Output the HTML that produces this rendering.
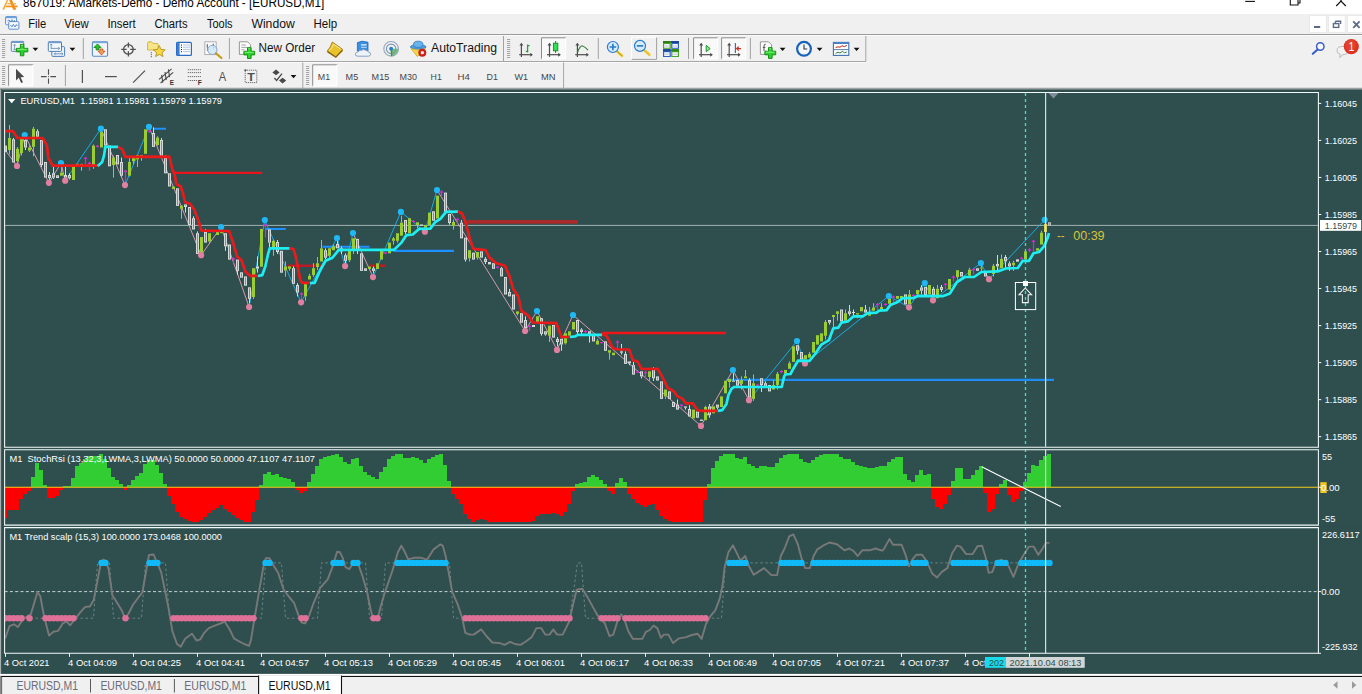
<!DOCTYPE html>
<html lang="en"><head><meta charset="utf-8"><title>867019: AMarkets-Demo - Demo Account - [EURUSD,M1]</title>
<style>
html,body{margin:0;padding:0;background:#f0f0f0;overflow:hidden}
svg{display:block;font-family:'Liberation Sans', 'DejaVu Sans', sans-serif}
</style></head><body>
<svg width="1362" height="694" viewBox="0 0 1362 694">
<rect x="0.00" y="0.00" width="1362.00" height="694.00" fill="#f0f0f0" /><rect x="0.00" y="0.00" width="1362.00" height="14.00" fill="#ffffff" /><rect x="0.00" y="89.60" width="1362.00" height="584.40" fill="#2f4f4f" /><rect x="0" y="87.6" width="1362" height="1.2" fill="#b9bcbc"/><rect x="0" y="88.6" width="1362" height="1.2" fill="#5f6f6f"/><rect x="0.00" y="89.50" width="1.30" height="584.50" fill="#a9aeae" /><rect x="1.30" y="89.50" width="0.90" height="584.50" fill="#3a5252" /><defs><clipPath id="cm"><rect x="5.1" y="93.0" width="1312.8000000000002" height="353.7"/></clipPath><clipPath id="c1"><rect x="5.1" y="450.2" width="1312.8000000000002" height="74.40000000000003"/></clipPath><clipPath id="c2"><rect x="5.1" y="528.1" width="1312.8000000000002" height="124.69999999999993"/></clipPath></defs><g clip-path="url(#cm)"><line x1="4.60" y1="225.40" x2="1318.40" y2="225.40" stroke="#9fb2b2" stroke-width="1" /><line x1="153.60" y1="128.80" x2="166.00" y2="128.80" stroke="#1e90ff" stroke-width="2" /><line x1="172.50" y1="172.90" x2="262.20" y2="172.90" stroke="#e8141c" stroke-width="2.4" /><line x1="265.30" y1="228.90" x2="285.80" y2="228.90" stroke="#1e90ff" stroke-width="2" /><line x1="286.60" y1="265.80" x2="321.70" y2="265.80" stroke="#b81c24" stroke-width="2.6" /><line x1="322.40" y1="246.80" x2="369.50" y2="246.80" stroke="#1e90ff" stroke-width="2" /><line x1="370.00" y1="265.80" x2="375.00" y2="265.80" stroke="#b81c24" stroke-width="2.6" /><line x1="380.00" y1="265.80" x2="386.00" y2="265.80" stroke="#b81c24" stroke-width="2.6" /><line x1="394.00" y1="250.90" x2="453.90" y2="250.90" stroke="#1e90ff" stroke-width="2.2" /><line x1="466.70" y1="221.90" x2="578.00" y2="221.90" stroke="#a82a2a" stroke-width="3.6" /><line x1="602.20" y1="333.00" x2="726.00" y2="333.00" stroke="#f01418" stroke-width="2.3" /><line x1="726.50" y1="379.90" x2="1054.00" y2="379.90" stroke="#1e8cf0" stroke-width="2.4" /><line x1="5.00" y1="150.00" x2="17.00" y2="166.00" stroke="#e9a3b7" stroke-width="0.9" /><line x1="17.00" y1="166.00" x2="24.70" y2="135.00" stroke="#e9a3b7" stroke-width="0.9" /><line x1="24.70" y1="135.00" x2="48.90" y2="182.80" stroke="#e9a3b7" stroke-width="0.9" /><line x1="48.90" y1="182.80" x2="61.00" y2="163.20" stroke="#e9a3b7" stroke-width="0.9" /><line x1="61.00" y1="163.20" x2="65.20" y2="180.70" stroke="#e9a3b7" stroke-width="0.9" /><line x1="65.20" y1="180.70" x2="100.90" y2="128.70" stroke="#19b4f0" stroke-width="0.9" /><line x1="100.90" y1="128.70" x2="125.00" y2="185.10" stroke="#e9a3b7" stroke-width="0.9" /><line x1="125.00" y1="185.10" x2="149.00" y2="126.80" stroke="#19b4f0" stroke-width="0.9" /><line x1="149.00" y1="126.80" x2="201.10" y2="255.20" stroke="#e9a3b7" stroke-width="0.9" /><line x1="201.10" y1="255.20" x2="221.10" y2="227.00" stroke="#e9a3b7" stroke-width="0.9" /><line x1="221.10" y1="227.00" x2="249.10" y2="307.00" stroke="#e9a3b7" stroke-width="0.9" /><line x1="249.10" y1="307.00" x2="264.80" y2="220.10" stroke="#19b4f0" stroke-width="0.9" /><line x1="264.80" y1="220.10" x2="301.00" y2="302.30" stroke="#19b4f0" stroke-width="0.9" /><line x1="301.00" y1="302.30" x2="337.00" y2="238.00" stroke="#19b4f0" stroke-width="0.9" /><line x1="337.00" y1="238.00" x2="345.10" y2="266.10" stroke="#19b4f0" stroke-width="0.9" /><line x1="345.10" y1="266.10" x2="353.00" y2="233.00" stroke="#19b4f0" stroke-width="0.9" /><line x1="353.00" y1="233.00" x2="373.00" y2="277.10" stroke="#e9a3b7" stroke-width="0.9" /><line x1="373.00" y1="277.10" x2="400.90" y2="211.90" stroke="#19b4f0" stroke-width="0.9" /><line x1="400.90" y1="211.90" x2="424.90" y2="231.70" stroke="#19b4f0" stroke-width="0.9" /><line x1="424.90" y1="231.70" x2="437.00" y2="190.00" stroke="#19b4f0" stroke-width="0.9" /><line x1="437.00" y1="190.00" x2="525.10" y2="331.00" stroke="#e9a3b7" stroke-width="0.9" /><line x1="525.10" y1="331.00" x2="537.00" y2="311.00" stroke="#e9a3b7" stroke-width="0.9" /><line x1="537.00" y1="311.00" x2="557.00" y2="349.90" stroke="#e9a3b7" stroke-width="0.9" /><line x1="557.00" y1="349.90" x2="573.00" y2="315.00" stroke="#e9a3b7" stroke-width="0.9" /><line x1="573.00" y1="315.00" x2="701.00" y2="425.90" stroke="#e9a3b7" stroke-width="0.9" /><line x1="701.00" y1="425.90" x2="732.90" y2="370.10" stroke="#e9a3b7" stroke-width="0.9" /><line x1="732.90" y1="370.10" x2="749.00" y2="400.20" stroke="#e9a3b7" stroke-width="0.9" /><line x1="749.00" y1="400.20" x2="797.00" y2="341.00" stroke="#19b4f0" stroke-width="0.9" /><line x1="797.00" y1="341.00" x2="805.00" y2="363.40" stroke="#19b4f0" stroke-width="0.9" /><line x1="805.00" y1="363.40" x2="888.80" y2="296.00" stroke="#19b4f0" stroke-width="0.9" /><line x1="888.80" y1="296.00" x2="909.00" y2="307.30" stroke="#19b4f0" stroke-width="0.9" /><line x1="909.00" y1="307.30" x2="924.80" y2="283.10" stroke="#19b4f0" stroke-width="0.9" /><line x1="924.80" y1="283.10" x2="933.00" y2="300.30" stroke="#19b4f0" stroke-width="0.9" /><line x1="933.00" y1="300.30" x2="980.90" y2="263.00" stroke="#19b4f0" stroke-width="0.9" /><line x1="980.90" y1="263.00" x2="989.00" y2="279.20" stroke="#19b4f0" stroke-width="0.9" /><line x1="989.00" y1="279.20" x2="1044.70" y2="219.80" stroke="#19b4f0" stroke-width="0.9" /><rect x="5.20" y="145.60" width="1.80" height="6.40" fill="#d6dada" /><line x1="9.50" y1="125.00" x2="9.50" y2="138.00" stroke="#9acd32" stroke-width="1" /><line x1="9.50" y1="150.00" x2="9.50" y2="154.50" stroke="#9acd32" stroke-width="1" /><rect x="8.00" y="138.00" width="3.00" height="12.00" fill="#9acd32" /><line x1="13.50" y1="138.00" x2="13.50" y2="139.30" stroke="#d6dada" stroke-width="1" /><rect x="12.00" y="139.30" width="3.00" height="23.20" fill="#d6dada" /><rect x="13.00" y="140.30" width="1.00" height="21.20" fill="#828e8e" /><line x1="17.50" y1="147.00" x2="17.50" y2="148.70" stroke="#9acd32" stroke-width="1" /><line x1="17.50" y1="161.30" x2="17.50" y2="163.00" stroke="#9acd32" stroke-width="1" /><rect x="16.00" y="148.70" width="3.00" height="12.60" fill="#9acd32" /><line x1="21.50" y1="153.00" x2="21.50" y2="155.60" stroke="#9acd32" stroke-width="1" /><rect x="20.00" y="138.70" width="3.00" height="14.30" fill="#9acd32" /><line x1="25.50" y1="139.30" x2="25.50" y2="140.00" stroke="#d6dada" stroke-width="1" /><line x1="25.50" y1="147.50" x2="25.50" y2="150.00" stroke="#d6dada" stroke-width="1" /><rect x="24.00" y="140.00" width="3.00" height="7.50" fill="#d6dada" /><rect x="25.00" y="141.00" width="1.00" height="5.50" fill="#828e8e" /><line x1="29.50" y1="145.60" x2="29.50" y2="147.50" stroke="#9acd32" stroke-width="1" /><line x1="29.50" y1="150.60" x2="29.50" y2="152.00" stroke="#9acd32" stroke-width="1" /><rect x="28.00" y="147.50" width="3.00" height="3.10" fill="#9acd32" /><line x1="33.50" y1="126.80" x2="33.50" y2="128.70" stroke="#9acd32" stroke-width="1" /><line x1="33.50" y1="146.90" x2="33.50" y2="156.30" stroke="#9acd32" stroke-width="1" /><rect x="32.00" y="128.70" width="3.00" height="18.20" fill="#9acd32" /><line x1="37.50" y1="129.30" x2="37.50" y2="131.20" stroke="#d6dada" stroke-width="1" /><rect x="36.00" y="131.20" width="3.00" height="5.60" fill="#d6dada" /><rect x="37.00" y="132.20" width="1.00" height="3.60" fill="#828e8e" /><line x1="41.50" y1="165.00" x2="41.50" y2="167.00" stroke="#d6dada" stroke-width="1" /><rect x="40.00" y="140.00" width="3.00" height="25.00" fill="#d6dada" /><rect x="41.00" y="141.00" width="1.00" height="23.00" fill="#828e8e" /><rect x="44.00" y="162.00" width="3.00" height="15.60" fill="#d6dada" /><rect x="45.00" y="163.00" width="1.00" height="13.60" fill="#828e8e" /><line x1="49.50" y1="172.00" x2="49.50" y2="175.00" stroke="#d6dada" stroke-width="1" /><line x1="49.50" y1="178.20" x2="49.50" y2="180.00" stroke="#d6dada" stroke-width="1" /><rect x="48.00" y="175.00" width="3.00" height="3.20" fill="#d6dada" /><rect x="49.00" y="176.00" width="1.00" height="1.20" fill="#828e8e" /><line x1="53.50" y1="167.00" x2="53.50" y2="173.20" stroke="#d6dada" stroke-width="1" /><line x1="53.50" y1="177.60" x2="53.50" y2="179.00" stroke="#d6dada" stroke-width="1" /><rect x="52.00" y="173.20" width="3.00" height="4.40" fill="#d6dada" /><rect x="53.00" y="174.20" width="1.00" height="2.40" fill="#828e8e" /><rect x="56.00" y="175.30" width="3.00" height="2.70" fill="#d6dada" /><rect x="57.00" y="176.30" width="1.00" height="0.70" fill="#828e8e" /><line x1="61.50" y1="167.00" x2="61.50" y2="172.60" stroke="#9acd32" stroke-width="1" /><rect x="60.00" y="172.60" width="3.00" height="3.10" fill="#9acd32" /><line x1="65.50" y1="167.00" x2="65.50" y2="175.00" stroke="#d6dada" stroke-width="1" /><rect x="64.00" y="175.00" width="3.00" height="2.60" fill="#d6dada" /><rect x="65.00" y="176.00" width="1.00" height="0.60" fill="#828e8e" /><line x1="69.50" y1="173.20" x2="69.50" y2="175.00" stroke="#d6dada" stroke-width="1" /><line x1="69.50" y1="178.20" x2="69.50" y2="179.50" stroke="#d6dada" stroke-width="1" /><rect x="68.00" y="175.00" width="3.00" height="3.20" fill="#d6dada" /><rect x="69.00" y="176.00" width="1.00" height="1.20" fill="#828e8e" /><rect x="72.00" y="167.00" width="3.00" height="13.00" fill="#9acd32" /><rect x="76.00" y="163.90" width="3.00" height="1.00" fill="#e0b040" /><rect x="80.00" y="163.90" width="3.00" height="1.00" fill="#e0b040" /><line x1="81.50" y1="164.40" x2="81.50" y2="170.70" stroke="#d8c040" stroke-width="1" /><line x1="85.50" y1="157.00" x2="85.50" y2="164.40" stroke="#d62ad6" stroke-width="1.2" /><path d="M83.9 159.2 L85.5 157.0 L87.1 159.2" stroke="#d62ad6" stroke-width="1" fill="none"/><line x1="89.50" y1="162.00" x2="89.50" y2="170.70" stroke="#d62ad6" stroke-width="1.2" /><path d="M87.9 164.2 L89.5 162.0 L91.1 164.2" stroke="#d62ad6" stroke-width="1" fill="none"/><line x1="93.50" y1="144.40" x2="93.50" y2="145.60" stroke="#9acd32" stroke-width="1" /><line x1="93.50" y1="165.00" x2="93.50" y2="168.80" stroke="#9acd32" stroke-width="1" /><rect x="92.00" y="145.60" width="3.00" height="19.40" fill="#9acd32" /><line x1="97.50" y1="145.00" x2="97.50" y2="147.50" stroke="#d62ad6" stroke-width="1.2" /><rect x="96.00" y="145.65" width="3.00" height="1.20" fill="#d62ad6" /><line x1="101.50" y1="126.80" x2="101.50" y2="131.80" stroke="#9acd32" stroke-width="1" /><rect x="100.00" y="131.80" width="3.00" height="15.70" fill="#9acd32" /><line x1="105.50" y1="145.60" x2="105.50" y2="147.00" stroke="#d6dada" stroke-width="1" /><rect x="104.00" y="129.30" width="3.00" height="16.30" fill="#d6dada" /><rect x="105.00" y="130.30" width="1.00" height="14.30" fill="#828e8e" /><rect x="108.00" y="145.60" width="3.00" height="20.70" fill="#d6dada" /><rect x="109.00" y="146.60" width="1.00" height="18.70" fill="#828e8e" /><line x1="113.50" y1="155.60" x2="113.50" y2="157.50" stroke="#9acd32" stroke-width="1" /><line x1="113.50" y1="165.00" x2="113.50" y2="177.60" stroke="#9acd32" stroke-width="1" /><rect x="112.00" y="157.50" width="3.00" height="7.50" fill="#9acd32" /><rect x="116.00" y="155.00" width="3.00" height="9.40" fill="#d6dada" /><rect x="117.00" y="156.00" width="1.00" height="7.40" fill="#828e8e" /><line x1="121.50" y1="157.50" x2="121.50" y2="162.00" stroke="#d6dada" stroke-width="1" /><line x1="121.50" y1="175.70" x2="121.50" y2="176.50" stroke="#d6dada" stroke-width="1" /><rect x="120.00" y="162.00" width="3.00" height="13.70" fill="#d6dada" /><rect x="121.00" y="163.00" width="1.00" height="11.70" fill="#828e8e" /><line x1="125.50" y1="170.00" x2="125.50" y2="182.00" stroke="#d62ad6" stroke-width="1.2" /><path d="M123.9 172.2 L125.5 170.0 L127.1 172.2" stroke="#d62ad6" stroke-width="1" fill="none"/><line x1="129.50" y1="158.00" x2="129.50" y2="162.00" stroke="#9acd32" stroke-width="1" /><line x1="129.50" y1="175.70" x2="129.50" y2="176.50" stroke="#9acd32" stroke-width="1" /><rect x="128.00" y="162.00" width="3.00" height="13.70" fill="#9acd32" /><line x1="133.50" y1="161.30" x2="133.50" y2="164.40" stroke="#9acd32" stroke-width="1" /><rect x="132.00" y="158.00" width="3.00" height="3.30" fill="#9acd32" /><line x1="137.50" y1="159.40" x2="137.50" y2="167.00" stroke="#9acd32" stroke-width="1" /><rect x="136.00" y="155.00" width="3.00" height="4.40" fill="#9acd32" /><rect x="140.00" y="155.10" width="3.00" height="1.00" fill="#e0b040" /><line x1="141.50" y1="155.60" x2="141.50" y2="160.70" stroke="#d8c040" stroke-width="1" /><rect x="144.00" y="129.30" width="3.00" height="24.50" fill="#9acd32" /><line x1="149.50" y1="129.50" x2="149.50" y2="133.00" stroke="#d62ad6" stroke-width="1.2" /><rect x="148.00" y="130.65" width="3.00" height="1.20" fill="#d62ad6" /><line x1="153.50" y1="127.40" x2="153.50" y2="133.00" stroke="#d6dada" stroke-width="1" /><rect x="152.00" y="133.00" width="3.00" height="13.90" fill="#d6dada" /><rect x="153.00" y="134.00" width="1.00" height="11.90" fill="#828e8e" /><line x1="157.50" y1="136.20" x2="157.50" y2="137.50" stroke="#9acd32" stroke-width="1" /><line x1="157.50" y1="145.00" x2="157.50" y2="145.60" stroke="#9acd32" stroke-width="1" /><rect x="156.00" y="137.50" width="3.00" height="7.50" fill="#9acd32" /><line x1="161.50" y1="138.00" x2="161.50" y2="140.00" stroke="#d6dada" stroke-width="1" /><rect x="160.00" y="140.00" width="3.00" height="16.50" fill="#d6dada" /><rect x="161.00" y="141.00" width="1.00" height="14.50" fill="#828e8e" /><line x1="165.50" y1="155.00" x2="165.50" y2="157.50" stroke="#d6dada" stroke-width="1" /><rect x="164.00" y="157.50" width="3.00" height="15.80" fill="#d6dada" /><rect x="165.00" y="158.50" width="1.00" height="13.80" fill="#828e8e" /><rect x="168.00" y="173.30" width="3.00" height="13.20" fill="#d6dada" /><rect x="169.00" y="174.30" width="1.00" height="11.20" fill="#828e8e" /><rect x="172.00" y="186.50" width="3.00" height="2.50" fill="#9acd32" /><rect x="176.00" y="188.30" width="3.00" height="17.60" fill="#d6dada" /><rect x="177.00" y="189.30" width="1.00" height="15.60" fill="#828e8e" /><line x1="181.50" y1="205.00" x2="181.50" y2="205.70" stroke="#9acd32" stroke-width="1" /><line x1="181.50" y1="208.80" x2="181.50" y2="218.80" stroke="#9acd32" stroke-width="1" /><rect x="180.00" y="205.70" width="3.00" height="3.10" fill="#9acd32" /><line x1="185.50" y1="207.00" x2="185.50" y2="212.60" stroke="#d6dada" stroke-width="1" /><rect x="184.00" y="204.40" width="3.00" height="2.60" fill="#d6dada" /><rect x="185.00" y="205.40" width="1.00" height="0.60" fill="#828e8e" /><rect x="188.00" y="207.00" width="3.00" height="18.00" fill="#d6dada" /><rect x="189.00" y="208.00" width="1.00" height="16.00" fill="#828e8e" /><line x1="193.50" y1="216.30" x2="193.50" y2="218.20" stroke="#d6dada" stroke-width="1" /><rect x="192.00" y="218.20" width="3.00" height="11.30" fill="#d6dada" /><rect x="193.00" y="219.20" width="1.00" height="9.30" fill="#828e8e" /><line x1="197.50" y1="231.40" x2="197.50" y2="233.20" stroke="#d6dada" stroke-width="1" /><rect x="196.00" y="233.20" width="3.00" height="20.80" fill="#d6dada" /><rect x="197.00" y="234.20" width="1.00" height="18.80" fill="#828e8e" /><rect x="200.00" y="237.00" width="3.00" height="17.00" fill="#9acd32" /><line x1="205.50" y1="228.90" x2="205.50" y2="232.00" stroke="#d6dada" stroke-width="1" /><rect x="204.00" y="232.00" width="3.00" height="10.60" fill="#d6dada" /><rect x="205.00" y="233.00" width="1.00" height="8.60" fill="#828e8e" /><line x1="209.50" y1="241.40" x2="209.50" y2="243.30" stroke="#9acd32" stroke-width="1" /><rect x="208.00" y="233.20" width="3.00" height="8.20" fill="#9acd32" /><line x1="213.50" y1="230.50" x2="213.50" y2="232.50" stroke="#d62ad6" stroke-width="1.2" /><rect x="212.00" y="230.90" width="3.00" height="1.20" fill="#d62ad6" /><rect x="216.00" y="232.00" width="3.00" height="3.00" fill="#9acd32" /><rect x="220.00" y="231.40" width="3.00" height="1.80" fill="#9acd32" /><line x1="225.50" y1="246.40" x2="225.50" y2="250.80" stroke="#d6dada" stroke-width="1" /><rect x="224.00" y="233.20" width="3.00" height="13.20" fill="#d6dada" /><rect x="225.00" y="234.20" width="1.00" height="11.20" fill="#828e8e" /><rect x="228.00" y="244.50" width="3.00" height="15.10" fill="#d6dada" /><rect x="229.00" y="245.50" width="1.00" height="13.10" fill="#828e8e" /><line x1="233.50" y1="257.70" x2="233.50" y2="262.70" stroke="#d62ad6" stroke-width="1.2" /><path d="M231.9 259.9 L233.5 257.7 L235.1 259.9" stroke="#d62ad6" stroke-width="1" fill="none"/><line x1="237.50" y1="270.90" x2="237.50" y2="275.00" stroke="#d6dada" stroke-width="1" /><rect x="236.00" y="259.60" width="3.00" height="11.30" fill="#d6dada" /><rect x="237.00" y="260.60" width="1.00" height="9.30" fill="#828e8e" /><rect x="240.00" y="272.30" width="3.00" height="5.40" fill="#d6dada" /><rect x="241.00" y="273.30" width="1.00" height="3.40" fill="#828e8e" /><rect x="244.00" y="276.40" width="3.00" height="9.30" fill="#d6dada" /><rect x="245.00" y="277.40" width="1.00" height="7.30" fill="#828e8e" /><line x1="249.50" y1="298.90" x2="249.50" y2="303.30" stroke="#d6dada" stroke-width="1" /><rect x="248.00" y="287.30" width="3.00" height="11.60" fill="#d6dada" /><rect x="249.00" y="288.30" width="1.00" height="9.60" fill="#828e8e" /><line x1="253.50" y1="297.00" x2="253.50" y2="299.00" stroke="#9acd32" stroke-width="1" /><rect x="252.00" y="268.20" width="3.00" height="28.80" fill="#9acd32" /><line x1="257.50" y1="256.40" x2="257.50" y2="266.40" stroke="#d6dada" stroke-width="1" /><line x1="257.50" y1="268.60" x2="257.50" y2="272.60" stroke="#d6dada" stroke-width="1" /><rect x="256.00" y="266.40" width="3.00" height="2.20" fill="#d6dada" /><rect x="260.00" y="228.90" width="3.00" height="37.80" fill="#9acd32" /><line x1="265.50" y1="223.80" x2="265.50" y2="237.60" stroke="#d62ad6" stroke-width="1.2" /><path d="M263.9 226.0 L265.5 223.8 L267.1 226.0" stroke="#d62ad6" stroke-width="1" fill="none"/><line x1="269.50" y1="242.60" x2="269.50" y2="247.70" stroke="#d6dada" stroke-width="1" /><rect x="268.00" y="229.50" width="3.00" height="13.10" fill="#d6dada" /><rect x="269.00" y="230.50" width="1.00" height="11.10" fill="#828e8e" /><line x1="273.50" y1="239.50" x2="273.50" y2="240.80" stroke="#9acd32" stroke-width="1" /><line x1="273.50" y1="248.90" x2="273.50" y2="255.80" stroke="#9acd32" stroke-width="1" /><rect x="272.00" y="240.80" width="3.00" height="8.10" fill="#9acd32" /><line x1="277.50" y1="240.00" x2="277.50" y2="242.00" stroke="#d6dada" stroke-width="1" /><line x1="277.50" y1="252.00" x2="277.50" y2="254.00" stroke="#d6dada" stroke-width="1" /><rect x="276.00" y="242.00" width="3.00" height="10.00" fill="#d6dada" /><rect x="277.00" y="243.00" width="1.00" height="8.00" fill="#828e8e" /><rect x="280.00" y="250.80" width="3.00" height="21.90" fill="#d6dada" /><rect x="281.00" y="251.80" width="1.00" height="19.90" fill="#828e8e" /><line x1="285.50" y1="261.40" x2="285.50" y2="266.40" stroke="#9acd32" stroke-width="1" /><line x1="285.50" y1="270.50" x2="285.50" y2="276.80" stroke="#9acd32" stroke-width="1" /><rect x="284.00" y="266.40" width="3.00" height="4.10" fill="#9acd32" /><line x1="289.50" y1="268.80" x2="289.50" y2="270.70" stroke="#9acd32" stroke-width="1" /><rect x="288.00" y="266.40" width="3.00" height="2.40" fill="#9acd32" /><line x1="293.50" y1="266.30" x2="293.50" y2="268.20" stroke="#d6dada" stroke-width="1" /><rect x="292.00" y="268.20" width="3.00" height="15.60" fill="#d6dada" /><rect x="293.00" y="269.20" width="1.00" height="13.60" fill="#828e8e" /><line x1="297.50" y1="283.20" x2="297.50" y2="285.00" stroke="#d6dada" stroke-width="1" /><line x1="297.50" y1="292.60" x2="297.50" y2="296.40" stroke="#d6dada" stroke-width="1" /><rect x="296.00" y="285.00" width="3.00" height="7.60" fill="#d6dada" /><rect x="297.00" y="286.00" width="1.00" height="5.60" fill="#828e8e" /><line x1="301.50" y1="292.60" x2="301.50" y2="299.50" stroke="#d62ad6" stroke-width="1.2" /><path d="M299.9 294.8 L301.5 292.6 L303.1 294.8" stroke="#d62ad6" stroke-width="1" fill="none"/><line x1="305.50" y1="296.40" x2="305.50" y2="300.80" stroke="#9acd32" stroke-width="1" /><rect x="304.00" y="283.80" width="3.00" height="12.60" fill="#9acd32" /><line x1="309.50" y1="273.80" x2="309.50" y2="275.80" stroke="#9acd32" stroke-width="1" /><rect x="308.00" y="275.80" width="3.00" height="3.70" fill="#9acd32" /><line x1="313.50" y1="263.20" x2="313.50" y2="268.20" stroke="#9acd32" stroke-width="1" /><line x1="313.50" y1="275.10" x2="313.50" y2="276.90" stroke="#9acd32" stroke-width="1" /><rect x="312.00" y="268.20" width="3.00" height="6.90" fill="#9acd32" /><line x1="317.50" y1="257.00" x2="317.50" y2="263.20" stroke="#9acd32" stroke-width="1" /><line x1="317.50" y1="267.00" x2="317.50" y2="270.00" stroke="#9acd32" stroke-width="1" /><rect x="316.00" y="263.20" width="3.00" height="3.80" fill="#9acd32" /><line x1="321.50" y1="240.00" x2="321.50" y2="248.30" stroke="#9acd32" stroke-width="1" /><rect x="320.00" y="248.30" width="3.00" height="13.20" fill="#9acd32" /><line x1="325.50" y1="248.30" x2="325.50" y2="250.20" stroke="#d6dada" stroke-width="1" /><line x1="325.50" y1="257.70" x2="325.50" y2="259.00" stroke="#d6dada" stroke-width="1" /><rect x="324.00" y="250.20" width="3.00" height="7.50" fill="#d6dada" /><rect x="325.00" y="251.20" width="1.00" height="5.50" fill="#828e8e" /><line x1="329.50" y1="255.80" x2="329.50" y2="257.70" stroke="#9acd32" stroke-width="1" /><rect x="328.00" y="248.30" width="3.00" height="7.50" fill="#9acd32" /><line x1="333.50" y1="244.50" x2="333.50" y2="246.40" stroke="#9acd32" stroke-width="1" /><rect x="332.00" y="246.40" width="3.00" height="3.80" fill="#9acd32" /><line x1="337.50" y1="240.80" x2="337.50" y2="243.90" stroke="#d6dada" stroke-width="1" /><rect x="336.00" y="243.90" width="3.00" height="4.40" fill="#d6dada" /><rect x="337.00" y="244.90" width="1.00" height="2.40" fill="#828e8e" /><line x1="341.50" y1="246.40" x2="341.50" y2="248.30" stroke="#d6dada" stroke-width="1" /><line x1="341.50" y1="251.40" x2="341.50" y2="254.00" stroke="#d6dada" stroke-width="1" /><rect x="340.00" y="248.30" width="3.00" height="3.10" fill="#d6dada" /><rect x="341.00" y="249.30" width="1.00" height="1.10" fill="#828e8e" /><line x1="345.50" y1="253.30" x2="345.50" y2="255.20" stroke="#d6dada" stroke-width="1" /><line x1="345.50" y1="260.80" x2="345.50" y2="263.30" stroke="#d6dada" stroke-width="1" /><rect x="344.00" y="255.20" width="3.00" height="5.60" fill="#d6dada" /><rect x="345.00" y="256.20" width="1.00" height="3.60" fill="#828e8e" /><line x1="349.50" y1="260.20" x2="349.50" y2="262.00" stroke="#9acd32" stroke-width="1" /><rect x="348.00" y="250.80" width="3.00" height="9.40" fill="#9acd32" /><line x1="353.50" y1="250.20" x2="353.50" y2="254.00" stroke="#9acd32" stroke-width="1" /><rect x="352.00" y="238.30" width="3.00" height="11.90" fill="#9acd32" /><line x1="357.50" y1="250.80" x2="357.50" y2="254.00" stroke="#d6dada" stroke-width="1" /><rect x="356.00" y="238.90" width="3.00" height="11.90" fill="#d6dada" /><rect x="357.00" y="239.90" width="1.00" height="9.90" fill="#828e8e" /><rect x="360.00" y="253.30" width="3.00" height="17.60" fill="#d6dada" /><rect x="361.00" y="254.30" width="1.00" height="15.60" fill="#828e8e" /><rect x="364.00" y="268.30" width="3.00" height="2.60" fill="#d6dada" /><rect x="365.00" y="269.30" width="1.00" height="0.60" fill="#828e8e" /><line x1="369.50" y1="269.00" x2="369.50" y2="270.20" stroke="#9acd32" stroke-width="1" /><rect x="368.00" y="266.50" width="3.00" height="2.50" fill="#9acd32" /><line x1="373.50" y1="266.50" x2="373.50" y2="268.30" stroke="#d6dada" stroke-width="1" /><line x1="373.50" y1="270.90" x2="373.50" y2="273.40" stroke="#d6dada" stroke-width="1" /><rect x="372.00" y="268.30" width="3.00" height="2.60" fill="#d6dada" /><rect x="373.00" y="269.30" width="1.00" height="0.60" fill="#828e8e" /><rect x="376.00" y="263.30" width="3.00" height="5.70" fill="#9acd32" /><rect x="380.00" y="250.80" width="3.00" height="8.80" fill="#9acd32" /><line x1="385.50" y1="252.00" x2="385.50" y2="254.00" stroke="#d62ad6" stroke-width="1.2" /><rect x="384.00" y="252.40" width="3.00" height="1.20" fill="#d62ad6" /><rect x="388.00" y="242.60" width="3.00" height="10.70" fill="#9acd32" /><line x1="393.50" y1="237.00" x2="393.50" y2="238.30" stroke="#9acd32" stroke-width="1" /><line x1="393.50" y1="240.80" x2="393.50" y2="244.50" stroke="#9acd32" stroke-width="1" /><rect x="392.00" y="238.30" width="3.00" height="2.50" fill="#9acd32" /><line x1="397.50" y1="240.80" x2="397.50" y2="242.60" stroke="#9acd32" stroke-width="1" /><rect x="396.00" y="233.20" width="3.00" height="7.60" fill="#9acd32" /><line x1="401.50" y1="215.70" x2="401.50" y2="222.60" stroke="#9acd32" stroke-width="1" /><rect x="400.00" y="222.60" width="3.00" height="13.10" fill="#9acd32" /><line x1="405.50" y1="232.00" x2="405.50" y2="233.90" stroke="#d6dada" stroke-width="1" /><rect x="404.00" y="220.00" width="3.00" height="12.00" fill="#d6dada" /><rect x="405.00" y="221.00" width="1.00" height="10.00" fill="#828e8e" /><rect x="408.00" y="218.20" width="3.00" height="15.00" fill="#9acd32" /><line x1="413.50" y1="220.00" x2="413.50" y2="223.00" stroke="#d62ad6" stroke-width="1.2" /><rect x="412.00" y="220.90" width="3.00" height="1.20" fill="#d62ad6" /><line x1="417.50" y1="225.00" x2="417.50" y2="228.20" stroke="#9acd32" stroke-width="1" /><rect x="416.00" y="222.30" width="3.00" height="2.70" fill="#9acd32" /><rect x="420.00" y="224.50" width="3.00" height="1.20" fill="#d6dada" /><rect x="424.00" y="225.00" width="3.00" height="2.80" fill="#9acd32" /><rect x="428.00" y="212.60" width="3.00" height="12.40" fill="#9acd32" /><rect x="432.00" y="211.30" width="3.00" height="9.40" fill="#d6dada" /><rect x="433.00" y="212.30" width="1.00" height="7.40" fill="#828e8e" /><rect x="436.00" y="195.70" width="3.00" height="22.80" fill="#9acd32" /><line x1="441.50" y1="190.70" x2="441.50" y2="197.00" stroke="#d62ad6" stroke-width="1.2" /><path d="M439.9 192.9 L441.5 190.7 L443.1 192.9" stroke="#d62ad6" stroke-width="1" fill="none"/><rect x="444.00" y="192.60" width="3.00" height="19.10" fill="#d6dada" /><rect x="445.00" y="193.60" width="1.00" height="17.10" fill="#828e8e" /><line x1="449.50" y1="223.00" x2="449.50" y2="224.70" stroke="#d6dada" stroke-width="1" /><rect x="448.00" y="214.00" width="3.00" height="9.00" fill="#d6dada" /><rect x="449.00" y="215.00" width="1.00" height="7.00" fill="#828e8e" /><line x1="453.50" y1="219.50" x2="453.50" y2="222.00" stroke="#9acd32" stroke-width="1" /><line x1="453.50" y1="225.80" x2="453.50" y2="229.60" stroke="#9acd32" stroke-width="1" /><rect x="452.00" y="222.00" width="3.00" height="3.80" fill="#9acd32" /><line x1="457.50" y1="218.20" x2="457.50" y2="223.80" stroke="#d62ad6" stroke-width="1.2" /><path d="M455.9 220.4 L457.5 218.2 L459.1 220.4" stroke="#d62ad6" stroke-width="1" fill="none"/><line x1="461.50" y1="220.00" x2="461.50" y2="222.60" stroke="#d6dada" stroke-width="1" /><rect x="460.00" y="222.60" width="3.00" height="15.70" fill="#d6dada" /><rect x="461.00" y="223.60" width="1.00" height="13.70" fill="#828e8e" /><line x1="465.50" y1="259.60" x2="465.50" y2="261.50" stroke="#d6dada" stroke-width="1" /><rect x="464.00" y="237.70" width="3.00" height="21.90" fill="#d6dada" /><rect x="465.00" y="238.70" width="1.00" height="19.90" fill="#828e8e" /><line x1="469.50" y1="258.30" x2="469.50" y2="261.50" stroke="#9acd32" stroke-width="1" /><rect x="468.00" y="250.20" width="3.00" height="8.10" fill="#9acd32" /><rect x="472.00" y="252.70" width="3.00" height="6.90" fill="#d6dada" /><rect x="473.00" y="253.70" width="1.00" height="4.90" fill="#828e8e" /><line x1="477.50" y1="257.70" x2="477.50" y2="259.60" stroke="#9acd32" stroke-width="1" /><rect x="476.00" y="252.00" width="3.00" height="5.70" fill="#9acd32" /><rect x="480.00" y="251.40" width="3.00" height="6.20" fill="#d6dada" /><rect x="481.00" y="252.40" width="1.00" height="4.20" fill="#828e8e" /><line x1="485.50" y1="257.00" x2="485.50" y2="258.80" stroke="#d6dada" stroke-width="1" /><line x1="485.50" y1="262.00" x2="485.50" y2="264.00" stroke="#d6dada" stroke-width="1" /><rect x="484.00" y="258.80" width="3.00" height="3.20" fill="#d6dada" /><rect x="485.00" y="259.80" width="1.00" height="1.20" fill="#828e8e" /><rect x="488.00" y="262.00" width="3.00" height="2.40" fill="#d6dada" /><rect x="492.00" y="263.20" width="3.00" height="5.60" fill="#d6dada" /><rect x="493.00" y="264.20" width="1.00" height="3.60" fill="#828e8e" /><line x1="497.50" y1="266.30" x2="497.50" y2="268.20" stroke="#d62ad6" stroke-width="1.2" /><rect x="496.00" y="266.65" width="3.00" height="1.20" fill="#d62ad6" /><line x1="501.50" y1="267.00" x2="501.50" y2="268.20" stroke="#d6dada" stroke-width="1" /><rect x="500.00" y="268.20" width="3.00" height="8.20" fill="#d6dada" /><rect x="501.00" y="269.20" width="1.00" height="6.20" fill="#828e8e" /><rect x="504.00" y="277.00" width="3.00" height="17.50" fill="#d6dada" /><rect x="505.00" y="278.00" width="1.00" height="15.50" fill="#828e8e" /><line x1="509.50" y1="288.90" x2="509.50" y2="292.00" stroke="#d6dada" stroke-width="1" /><rect x="508.00" y="292.00" width="3.00" height="4.40" fill="#d6dada" /><rect x="509.00" y="293.00" width="1.00" height="2.40" fill="#828e8e" /><rect x="512.00" y="294.50" width="3.00" height="15.00" fill="#d6dada" /><rect x="513.00" y="295.50" width="1.00" height="13.00" fill="#828e8e" /><line x1="517.50" y1="313.90" x2="517.50" y2="315.50" stroke="#9acd32" stroke-width="1" /><rect x="516.00" y="311.40" width="3.00" height="2.50" fill="#9acd32" /><rect x="520.00" y="313.20" width="3.00" height="9.50" fill="#d6dada" /><rect x="521.00" y="314.20" width="1.00" height="7.50" fill="#828e8e" /><line x1="525.50" y1="316.30" x2="525.50" y2="320.00" stroke="#d6dada" stroke-width="1" /><rect x="524.00" y="320.00" width="3.00" height="8.20" fill="#d6dada" /><rect x="525.00" y="321.00" width="1.00" height="6.20" fill="#828e8e" /><line x1="529.50" y1="325.00" x2="529.50" y2="331.00" stroke="#d62ad6" stroke-width="1.2" /><path d="M527.9 327.2 L529.5 325.0 L531.1 327.2" stroke="#d62ad6" stroke-width="1" fill="none"/><rect x="532.00" y="325.00" width="3.00" height="2.00" fill="#d6dada" /><rect x="536.00" y="316.30" width="3.00" height="6.30" fill="#9acd32" /><line x1="541.50" y1="333.90" x2="541.50" y2="335.70" stroke="#d6dada" stroke-width="1" /><rect x="540.00" y="318.20" width="3.00" height="15.70" fill="#d6dada" /><rect x="541.00" y="319.20" width="1.00" height="13.70" fill="#828e8e" /><line x1="545.50" y1="334.50" x2="545.50" y2="335.70" stroke="#d6dada" stroke-width="1" /><rect x="544.00" y="331.30" width="3.00" height="3.20" fill="#d6dada" /><rect x="545.00" y="332.30" width="1.00" height="1.20" fill="#828e8e" /><line x1="549.50" y1="335.70" x2="549.50" y2="342.00" stroke="#9acd32" stroke-width="1" /><rect x="548.00" y="325.70" width="3.00" height="10.00" fill="#9acd32" /><rect x="552.00" y="325.00" width="3.00" height="12.60" fill="#d6dada" /><rect x="553.00" y="326.00" width="1.00" height="10.60" fill="#828e8e" /><line x1="557.50" y1="337.00" x2="557.50" y2="338.90" stroke="#d6dada" stroke-width="1" /><line x1="557.50" y1="342.00" x2="557.50" y2="346.40" stroke="#d6dada" stroke-width="1" /><rect x="556.00" y="338.90" width="3.00" height="3.10" fill="#d6dada" /><rect x="557.00" y="339.90" width="1.00" height="1.10" fill="#828e8e" /><line x1="561.50" y1="344.50" x2="561.50" y2="350.80" stroke="#d6dada" stroke-width="1" /><rect x="560.00" y="338.90" width="3.00" height="5.60" fill="#d6dada" /><rect x="561.00" y="339.90" width="1.00" height="3.60" fill="#828e8e" /><line x1="565.50" y1="343.30" x2="565.50" y2="344.50" stroke="#9acd32" stroke-width="1" /><rect x="564.00" y="333.20" width="3.00" height="10.10" fill="#9acd32" /><rect x="568.00" y="331.30" width="3.00" height="4.40" fill="#9acd32" /><rect x="572.00" y="322.00" width="3.00" height="7.50" fill="#9acd32" /><line x1="577.50" y1="332.00" x2="577.50" y2="334.50" stroke="#d6dada" stroke-width="1" /><rect x="576.00" y="320.00" width="3.00" height="12.00" fill="#d6dada" /><rect x="577.00" y="321.00" width="1.00" height="10.00" fill="#828e8e" /><line x1="581.50" y1="328.20" x2="581.50" y2="329.50" stroke="#d6dada" stroke-width="1" /><line x1="581.50" y1="332.00" x2="581.50" y2="333.90" stroke="#d6dada" stroke-width="1" /><rect x="580.00" y="329.50" width="3.00" height="2.50" fill="#d6dada" /><rect x="581.00" y="330.50" width="1.00" height="0.50" fill="#828e8e" /><line x1="585.50" y1="330.00" x2="585.50" y2="333.00" stroke="#d62ad6" stroke-width="1.2" /><rect x="584.00" y="330.90" width="3.00" height="1.20" fill="#d62ad6" /><line x1="589.50" y1="333.90" x2="589.50" y2="342.60" stroke="#d6dada" stroke-width="1" /><rect x="588.00" y="331.30" width="3.00" height="2.60" fill="#d6dada" /><rect x="589.00" y="332.30" width="1.00" height="0.60" fill="#828e8e" /><rect x="592.00" y="333.90" width="3.00" height="7.50" fill="#d6dada" /><rect x="593.00" y="334.90" width="1.00" height="5.50" fill="#828e8e" /><line x1="597.50" y1="338.90" x2="597.50" y2="340.70" stroke="#9acd32" stroke-width="1" /><rect x="596.00" y="340.70" width="3.00" height="3.80" fill="#9acd32" /><line x1="601.50" y1="342.00" x2="601.50" y2="343.20" stroke="#d62ad6" stroke-width="1.2" /><rect x="600.00" y="342.00" width="3.00" height="1.20" fill="#d62ad6" /><rect x="604.00" y="341.40" width="3.00" height="9.40" fill="#d6dada" /><rect x="605.00" y="342.40" width="1.00" height="7.40" fill="#828e8e" /><line x1="609.50" y1="352.70" x2="609.50" y2="359.60" stroke="#9acd32" stroke-width="1" /><rect x="608.00" y="350.20" width="3.00" height="2.50" fill="#9acd32" /><rect x="612.00" y="352.70" width="3.00" height="2.50" fill="#9acd32" /><line x1="617.50" y1="340.70" x2="617.50" y2="350.20" stroke="#d62ad6" stroke-width="1.2" /><path d="M615.9 342.9 L617.5 340.7 L619.1 342.9" stroke="#d62ad6" stroke-width="1" fill="none"/><line x1="621.50" y1="343.90" x2="621.50" y2="351.40" stroke="#d6dada" stroke-width="1" /><line x1="621.50" y1="352.70" x2="621.50" y2="354.50" stroke="#d6dada" stroke-width="1" /><rect x="620.00" y="351.40" width="3.00" height="1.30" fill="#d6dada" /><line x1="625.50" y1="351.40" x2="625.50" y2="353.90" stroke="#d6dada" stroke-width="1" /><rect x="624.00" y="353.90" width="3.00" height="10.00" fill="#d6dada" /><rect x="625.00" y="354.90" width="1.00" height="8.00" fill="#828e8e" /><line x1="629.50" y1="363.30" x2="629.50" y2="365.20" stroke="#d6dada" stroke-width="1" /><rect x="628.00" y="361.40" width="3.00" height="1.90" fill="#d6dada" /><line x1="633.50" y1="362.00" x2="633.50" y2="365.20" stroke="#d6dada" stroke-width="1" /><rect x="632.00" y="365.20" width="3.00" height="9.40" fill="#d6dada" /><rect x="633.00" y="366.20" width="1.00" height="7.40" fill="#828e8e" /><line x1="637.50" y1="371.50" x2="637.50" y2="372.50" stroke="#d62ad6" stroke-width="1.2" /><rect x="636.00" y="371.40" width="3.00" height="1.20" fill="#d62ad6" /><line x1="641.50" y1="376.40" x2="641.50" y2="378.40" stroke="#d6dada" stroke-width="1" /><rect x="640.00" y="371.30" width="3.00" height="5.10" fill="#d6dada" /><rect x="641.00" y="372.30" width="1.00" height="3.10" fill="#828e8e" /><line x1="645.50" y1="371.30" x2="645.50" y2="379.60" stroke="#d62ad6" stroke-width="1.2" /><path d="M643.9 373.5 L645.5 371.3 L647.1 373.5" stroke="#d62ad6" stroke-width="1" fill="none"/><line x1="649.50" y1="377.00" x2="649.50" y2="380.80" stroke="#9acd32" stroke-width="1" /><rect x="648.00" y="371.30" width="3.00" height="5.70" fill="#9acd32" /><line x1="653.50" y1="367.00" x2="653.50" y2="368.90" stroke="#d6dada" stroke-width="1" /><line x1="653.50" y1="378.30" x2="653.50" y2="381.00" stroke="#d6dada" stroke-width="1" /><rect x="652.00" y="368.90" width="3.00" height="9.40" fill="#d6dada" /><rect x="653.00" y="369.90" width="1.00" height="7.40" fill="#828e8e" /><rect x="656.00" y="376.40" width="3.00" height="4.10" fill="#d6dada" /><rect x="657.00" y="377.40" width="1.00" height="2.10" fill="#828e8e" /><rect x="660.00" y="381.40" width="3.00" height="17.50" fill="#d6dada" /><rect x="661.00" y="382.40" width="1.00" height="15.50" fill="#828e8e" /><line x1="665.50" y1="396.40" x2="665.50" y2="398.90" stroke="#9acd32" stroke-width="1" /><rect x="664.00" y="389.50" width="3.00" height="6.90" fill="#9acd32" /><rect x="668.00" y="391.40" width="3.00" height="7.50" fill="#d6dada" /><rect x="669.00" y="392.40" width="1.00" height="5.50" fill="#828e8e" /><rect x="672.00" y="402.00" width="3.00" height="5.00" fill="#d6dada" /><rect x="673.00" y="403.00" width="1.00" height="3.00" fill="#828e8e" /><line x1="677.50" y1="399.50" x2="677.50" y2="404.60" stroke="#d6dada" stroke-width="1" /><rect x="676.00" y="404.60" width="3.00" height="5.00" fill="#d6dada" /><rect x="677.00" y="405.60" width="1.00" height="3.00" fill="#828e8e" /><line x1="681.50" y1="404.00" x2="681.50" y2="409.00" stroke="#d62ad6" stroke-width="1.2" /><path d="M679.9 406.2 L681.5 404.0 L683.1 406.2" stroke="#d62ad6" stroke-width="1" fill="none"/><line x1="685.50" y1="407.70" x2="685.50" y2="409.60" stroke="#d6dada" stroke-width="1" /><rect x="684.00" y="406.40" width="3.00" height="1.30" fill="#d6dada" /><line x1="689.50" y1="405.20" x2="689.50" y2="409.00" stroke="#d6dada" stroke-width="1" /><rect x="688.00" y="409.00" width="3.00" height="7.50" fill="#d6dada" /><rect x="689.00" y="410.00" width="1.00" height="5.50" fill="#828e8e" /><rect x="692.00" y="409.60" width="3.00" height="8.70" fill="#9acd32" /><rect x="696.00" y="411.50" width="3.00" height="6.20" fill="#d6dada" /><rect x="697.00" y="412.50" width="1.00" height="4.20" fill="#828e8e" /><rect x="700.00" y="419.60" width="3.00" height="1.30" fill="#d6dada" /><line x1="705.50" y1="405.80" x2="705.50" y2="407.00" stroke="#9acd32" stroke-width="1" /><rect x="704.00" y="407.00" width="3.00" height="13.20" fill="#9acd32" /><line x1="709.50" y1="404.00" x2="709.50" y2="406.40" stroke="#d6dada" stroke-width="1" /><line x1="709.50" y1="415.20" x2="709.50" y2="417.70" stroke="#d6dada" stroke-width="1" /><rect x="708.00" y="406.40" width="3.00" height="8.80" fill="#d6dada" /><rect x="709.00" y="407.40" width="1.00" height="6.80" fill="#828e8e" /><rect x="712.00" y="406.40" width="3.00" height="6.90" fill="#9acd32" /><line x1="717.50" y1="407.70" x2="717.50" y2="409.60" stroke="#d6dada" stroke-width="1" /><rect x="716.00" y="404.60" width="3.00" height="3.10" fill="#d6dada" /><rect x="717.00" y="405.60" width="1.00" height="1.10" fill="#828e8e" /><rect x="720.00" y="396.40" width="3.00" height="10.60" fill="#9acd32" /><rect x="724.00" y="380.70" width="3.00" height="12.60" fill="#9acd32" /><line x1="729.50" y1="382.00" x2="729.50" y2="387.60" stroke="#9acd32" stroke-width="1" /><rect x="728.00" y="378.90" width="3.00" height="3.10" fill="#9acd32" /><line x1="733.50" y1="373.20" x2="733.50" y2="380.70" stroke="#d6dada" stroke-width="1" /><rect x="732.00" y="380.70" width="3.00" height="1.00" fill="#d6dada" /><rect x="736.00" y="380.10" width="3.00" height="5.60" fill="#d6dada" /><rect x="737.00" y="381.10" width="1.00" height="3.60" fill="#828e8e" /><line x1="741.50" y1="376.30" x2="741.50" y2="380.10" stroke="#9acd32" stroke-width="1" /><line x1="741.50" y1="383.90" x2="741.50" y2="389.50" stroke="#9acd32" stroke-width="1" /><rect x="740.00" y="380.10" width="3.00" height="3.80" fill="#9acd32" /><line x1="745.50" y1="370.00" x2="745.50" y2="376.30" stroke="#9acd32" stroke-width="1" /><rect x="744.00" y="376.30" width="3.00" height="1.90" fill="#9acd32" /><line x1="749.50" y1="378.20" x2="749.50" y2="380.10" stroke="#d6dada" stroke-width="1" /><rect x="748.00" y="380.10" width="3.00" height="17.60" fill="#d6dada" /><rect x="749.00" y="381.10" width="1.00" height="15.60" fill="#828e8e" /><line x1="753.50" y1="374.50" x2="753.50" y2="383.20" stroke="#9acd32" stroke-width="1" /><line x1="753.50" y1="398.90" x2="753.50" y2="400.80" stroke="#9acd32" stroke-width="1" /><rect x="752.00" y="383.20" width="3.00" height="15.70" fill="#9acd32" /><line x1="757.50" y1="384.50" x2="757.50" y2="385.50" stroke="#d62ad6" stroke-width="1.2" /><rect x="756.00" y="384.40" width="3.00" height="1.20" fill="#d62ad6" /><line x1="761.50" y1="385.10" x2="761.50" y2="392.00" stroke="#d6dada" stroke-width="1" /><rect x="760.00" y="378.20" width="3.00" height="6.90" fill="#d6dada" /><rect x="761.00" y="379.20" width="1.00" height="4.90" fill="#828e8e" /><line x1="765.50" y1="381.40" x2="765.50" y2="383.20" stroke="#d6dada" stroke-width="1" /><rect x="764.00" y="383.20" width="3.00" height="3.80" fill="#d6dada" /><rect x="765.00" y="384.20" width="1.00" height="1.80" fill="#828e8e" /><rect x="768.00" y="385.00" width="3.00" height="6.40" fill="#d6dada" /><rect x="769.00" y="386.00" width="1.00" height="4.40" fill="#828e8e" /><line x1="773.50" y1="380.10" x2="773.50" y2="385.00" stroke="#9acd32" stroke-width="1" /><rect x="772.00" y="385.00" width="3.00" height="4.50" fill="#9acd32" /><line x1="777.50" y1="372.00" x2="777.50" y2="373.80" stroke="#9acd32" stroke-width="1" /><line x1="777.50" y1="385.00" x2="777.50" y2="389.50" stroke="#9acd32" stroke-width="1" /><rect x="776.00" y="373.80" width="3.00" height="11.20" fill="#9acd32" /><line x1="781.50" y1="370.00" x2="781.50" y2="373.20" stroke="#d62ad6" stroke-width="1.2" /><rect x="780.00" y="371.00" width="3.00" height="1.20" fill="#d62ad6" /><rect x="784.00" y="370.00" width="3.00" height="3.80" fill="#9acd32" /><line x1="789.50" y1="361.30" x2="789.50" y2="363.20" stroke="#9acd32" stroke-width="1" /><rect x="788.00" y="363.20" width="3.00" height="5.60" fill="#9acd32" /><rect x="792.00" y="346.30" width="3.00" height="15.60" fill="#9acd32" /><line x1="797.50" y1="350.70" x2="797.50" y2="354.50" stroke="#d6dada" stroke-width="1" /><rect x="796.00" y="345.20" width="3.00" height="5.50" fill="#d6dada" /><rect x="797.00" y="346.20" width="1.00" height="3.50" fill="#828e8e" /><rect x="800.00" y="352.00" width="3.00" height="7.50" fill="#d6dada" /><rect x="801.00" y="353.00" width="1.00" height="5.50" fill="#828e8e" /><rect x="804.00" y="355.10" width="3.00" height="4.40" fill="#9acd32" /><line x1="809.50" y1="352.00" x2="809.50" y2="354.00" stroke="#9acd32" stroke-width="1" /><rect x="808.00" y="354.00" width="3.00" height="3.70" fill="#9acd32" /><rect x="812.00" y="342.00" width="3.00" height="10.70" fill="#9acd32" /><rect x="816.00" y="335.20" width="3.00" height="9.40" fill="#9acd32" /><rect x="820.00" y="333.30" width="3.00" height="8.10" fill="#9acd32" /><line x1="825.50" y1="320.00" x2="825.50" y2="322.00" stroke="#9acd32" stroke-width="1" /><line x1="825.50" y1="335.80" x2="825.50" y2="339.50" stroke="#9acd32" stroke-width="1" /><rect x="824.00" y="322.00" width="3.00" height="13.80" fill="#9acd32" /><line x1="829.50" y1="322.60" x2="829.50" y2="324.50" stroke="#d6dada" stroke-width="1" /><rect x="828.00" y="320.00" width="3.00" height="2.60" fill="#d6dada" /><rect x="829.00" y="321.00" width="1.00" height="0.60" fill="#828e8e" /><line x1="833.50" y1="317.00" x2="833.50" y2="327.00" stroke="#9acd32" stroke-width="1" /><rect x="832.00" y="315.00" width="3.00" height="2.00" fill="#9acd32" /><line x1="837.50" y1="313.90" x2="837.50" y2="320.70" stroke="#9acd32" stroke-width="1" /><rect x="836.00" y="311.30" width="3.00" height="2.60" fill="#9acd32" /><rect x="840.00" y="309.50" width="3.00" height="11.90" fill="#d6dada" /><rect x="841.00" y="310.50" width="1.00" height="9.90" fill="#828e8e" /><line x1="845.50" y1="309.50" x2="845.50" y2="313.20" stroke="#9acd32" stroke-width="1" /><rect x="844.00" y="313.20" width="3.00" height="7.50" fill="#9acd32" /><line x1="849.50" y1="305.00" x2="849.50" y2="311.30" stroke="#d6dada" stroke-width="1" /><line x1="849.50" y1="313.90" x2="849.50" y2="315.70" stroke="#d6dada" stroke-width="1" /><rect x="848.00" y="311.30" width="3.00" height="2.60" fill="#d6dada" /><rect x="849.00" y="312.30" width="1.00" height="0.60" fill="#828e8e" /><line x1="853.50" y1="309.50" x2="853.50" y2="312.00" stroke="#d6dada" stroke-width="1" /><line x1="853.50" y1="313.00" x2="853.50" y2="315.00" stroke="#d6dada" stroke-width="1" /><rect x="852.00" y="312.00" width="3.00" height="1.00" fill="#d6dada" /><line x1="857.50" y1="314.50" x2="857.50" y2="318.20" stroke="#9acd32" stroke-width="1" /><rect x="856.00" y="313.20" width="3.00" height="1.30" fill="#9acd32" /><rect x="860.00" y="307.00" width="3.00" height="4.30" fill="#9acd32" /><line x1="865.50" y1="305.00" x2="865.50" y2="309.50" stroke="#d6dada" stroke-width="1" /><rect x="864.00" y="309.50" width="3.00" height="3.10" fill="#d6dada" /><rect x="865.00" y="310.50" width="1.00" height="1.10" fill="#828e8e" /><line x1="869.50" y1="307.00" x2="869.50" y2="312.00" stroke="#9acd32" stroke-width="1" /><rect x="868.00" y="312.00" width="3.00" height="3.70" fill="#9acd32" /><line x1="873.50" y1="303.20" x2="873.50" y2="307.60" stroke="#9acd32" stroke-width="1" /><rect x="872.00" y="307.60" width="3.00" height="3.10" fill="#9acd32" /><line x1="877.50" y1="303.20" x2="877.50" y2="310.00" stroke="#d62ad6" stroke-width="1.2" /><path d="M875.9 305.4 L877.5 303.2 L879.1 305.4" stroke="#d62ad6" stroke-width="1" fill="none"/><line x1="881.50" y1="303.20" x2="881.50" y2="307.00" stroke="#9acd32" stroke-width="1" /><rect x="880.00" y="307.00" width="3.00" height="3.00" fill="#9acd32" /><line x1="885.50" y1="303.20" x2="885.50" y2="305.70" stroke="#d62ad6" stroke-width="1.2" /><rect x="884.00" y="303.85" width="3.00" height="1.20" fill="#d62ad6" /><rect x="888.00" y="298.20" width="3.00" height="5.60" fill="#9acd32" /><line x1="893.50" y1="295.70" x2="893.50" y2="302.00" stroke="#d62ad6" stroke-width="1.2" /><path d="M891.9 297.9 L893.5 295.7 L895.1 297.9" stroke="#d62ad6" stroke-width="1" fill="none"/><rect x="896.00" y="296.00" width="3.00" height="2.80" fill="#9acd32" /><rect x="900.00" y="296.00" width="3.00" height="2.80" fill="#9acd32" /><rect x="904.00" y="294.40" width="3.00" height="10.00" fill="#d6dada" /><rect x="905.00" y="295.40" width="1.00" height="8.00" fill="#828e8e" /><line x1="909.50" y1="290.00" x2="909.50" y2="294.40" stroke="#9acd32" stroke-width="1" /><rect x="908.00" y="294.40" width="3.00" height="10.00" fill="#9acd32" /><line x1="913.50" y1="294.40" x2="913.50" y2="296.30" stroke="#d62ad6" stroke-width="1.2" /><rect x="912.00" y="294.75" width="3.00" height="1.20" fill="#d62ad6" /><rect x="916.00" y="290.00" width="3.00" height="4.40" fill="#9acd32" /><line x1="921.50" y1="285.00" x2="921.50" y2="287.50" stroke="#d6dada" stroke-width="1" /><line x1="921.50" y1="290.70" x2="921.50" y2="294.40" stroke="#d6dada" stroke-width="1" /><rect x="920.00" y="287.50" width="3.00" height="3.20" fill="#d6dada" /><rect x="921.00" y="288.50" width="1.00" height="1.20" fill="#828e8e" /><rect x="924.00" y="286.90" width="3.00" height="8.10" fill="#d6dada" /><rect x="925.00" y="287.90" width="1.00" height="6.10" fill="#828e8e" /><rect x="928.00" y="285.00" width="3.00" height="9.40" fill="#9acd32" /><line x1="933.50" y1="286.90" x2="933.50" y2="288.80" stroke="#d6dada" stroke-width="1" /><rect x="932.00" y="288.80" width="3.00" height="6.20" fill="#d6dada" /><rect x="933.00" y="289.80" width="1.00" height="4.20" fill="#828e8e" /><line x1="937.50" y1="285.00" x2="937.50" y2="288.80" stroke="#9acd32" stroke-width="1" /><rect x="936.00" y="288.80" width="3.00" height="9.40" fill="#9acd32" /><line x1="941.50" y1="285.00" x2="941.50" y2="287.00" stroke="#d6dada" stroke-width="1" /><line x1="941.50" y1="290.00" x2="941.50" y2="292.00" stroke="#d6dada" stroke-width="1" /><rect x="940.00" y="287.00" width="3.00" height="3.00" fill="#d6dada" /><rect x="941.00" y="288.00" width="1.00" height="1.00" fill="#828e8e" /><line x1="945.50" y1="283.10" x2="945.50" y2="289.40" stroke="#d62ad6" stroke-width="1.2" /><path d="M943.9 285.3 L945.5 283.1 L947.1 285.3" stroke="#d62ad6" stroke-width="1" fill="none"/><rect x="948.00" y="279.00" width="3.00" height="10.60" fill="#9acd32" /><line x1="953.50" y1="275.80" x2="953.50" y2="281.50" stroke="#d62ad6" stroke-width="1.2" /><path d="M951.9 278.0 L953.5 275.8 L955.1 278.0" stroke="#d62ad6" stroke-width="1" fill="none"/><line x1="957.50" y1="277.00" x2="957.50" y2="279.60" stroke="#9acd32" stroke-width="1" /><rect x="956.00" y="270.20" width="3.00" height="6.80" fill="#9acd32" /><rect x="960.00" y="272.00" width="3.00" height="4.50" fill="#d6dada" /><rect x="961.00" y="273.00" width="1.00" height="2.50" fill="#828e8e" /><line x1="969.50" y1="267.70" x2="969.50" y2="269.60" stroke="#9acd32" stroke-width="1" /><rect x="968.00" y="269.60" width="3.00" height="6.20" fill="#9acd32" /><line x1="973.50" y1="268.30" x2="973.50" y2="274.60" stroke="#d62ad6" stroke-width="1.2" /><path d="M971.9 270.5 L973.5 268.3 L975.1 270.5" stroke="#d62ad6" stroke-width="1" fill="none"/><rect x="976.00" y="268.30" width="3.00" height="2.50" fill="#d6dada" /><rect x="977.00" y="269.30" width="1.00" height="0.50" fill="#828e8e" /><line x1="981.50" y1="265.80" x2="981.50" y2="267.50" stroke="#9acd32" stroke-width="1" /><line x1="981.50" y1="268.50" x2="981.50" y2="271.40" stroke="#9acd32" stroke-width="1" /><rect x="980.00" y="267.50" width="3.00" height="1.00" fill="#9acd32" /><rect x="984.00" y="272.70" width="3.00" height="3.80" fill="#d6dada" /><rect x="985.00" y="273.70" width="1.00" height="1.80" fill="#828e8e" /><line x1="993.50" y1="263.90" x2="993.50" y2="265.80" stroke="#9acd32" stroke-width="1" /><line x1="993.50" y1="274.00" x2="993.50" y2="276.50" stroke="#9acd32" stroke-width="1" /><rect x="992.00" y="265.80" width="3.00" height="8.20" fill="#9acd32" /><line x1="997.50" y1="255.00" x2="997.50" y2="263.90" stroke="#d6dada" stroke-width="1" /><line x1="997.50" y1="266.40" x2="997.50" y2="270.20" stroke="#d6dada" stroke-width="1" /><rect x="996.00" y="263.90" width="3.00" height="2.50" fill="#d6dada" /><rect x="997.00" y="264.90" width="1.00" height="0.50" fill="#828e8e" /><line x1="1001.50" y1="254.50" x2="1001.50" y2="258.90" stroke="#9acd32" stroke-width="1" /><rect x="1000.00" y="258.90" width="3.00" height="9.40" fill="#9acd32" /><line x1="1005.50" y1="255.00" x2="1005.50" y2="257.00" stroke="#d6dada" stroke-width="1" /><line x1="1005.50" y1="261.40" x2="1005.50" y2="267.70" stroke="#d6dada" stroke-width="1" /><rect x="1004.00" y="257.00" width="3.00" height="4.40" fill="#d6dada" /><rect x="1005.00" y="258.00" width="1.00" height="2.40" fill="#828e8e" /><line x1="1009.50" y1="261.40" x2="1009.50" y2="263.30" stroke="#d6dada" stroke-width="1" /><line x1="1009.50" y1="266.40" x2="1009.50" y2="270.80" stroke="#d6dada" stroke-width="1" /><rect x="1008.00" y="263.30" width="3.00" height="3.10" fill="#d6dada" /><rect x="1009.00" y="264.30" width="1.00" height="1.10" fill="#828e8e" /><line x1="1013.50" y1="260.80" x2="1013.50" y2="262.70" stroke="#9acd32" stroke-width="1" /><line x1="1013.50" y1="265.20" x2="1013.50" y2="270.80" stroke="#9acd32" stroke-width="1" /><rect x="1012.00" y="262.70" width="3.00" height="2.50" fill="#9acd32" /><rect x="1016.00" y="259.30" width="3.00" height="2.40" fill="#d6dada" /><line x1="1021.50" y1="257.00" x2="1021.50" y2="259.50" stroke="#d62ad6" stroke-width="1.2" /><rect x="1020.00" y="257.65" width="3.00" height="1.20" fill="#d62ad6" /><line x1="1025.50" y1="248.90" x2="1025.50" y2="251.40" stroke="#9acd32" stroke-width="1" /><rect x="1024.00" y="251.40" width="3.00" height="8.10" fill="#9acd32" /><line x1="1029.50" y1="248.00" x2="1029.50" y2="252.00" stroke="#d62ad6" stroke-width="1.2" /><rect x="1028.00" y="249.40" width="3.00" height="1.20" fill="#d62ad6" /><line x1="1033.50" y1="240.00" x2="1033.50" y2="251.40" stroke="#d62ad6" stroke-width="1.2" /><path d="M1031.9 242.2 L1033.5 240.0 L1035.1 242.2" stroke="#d62ad6" stroke-width="1" fill="none"/><rect x="1036.00" y="248.20" width="3.00" height="2.50" fill="#9acd32" /><line x1="1041.50" y1="230.70" x2="1041.50" y2="232.60" stroke="#9acd32" stroke-width="1" /><rect x="1040.00" y="232.60" width="3.00" height="11.90" fill="#9acd32" /><rect x="1044.00" y="223.80" width="3.00" height="8.20" fill="#d6d25a" /><rect x="1048.00" y="222.20" width="3.00" height="3.50" fill="#b9bdbd" /><rect x="1049.00" y="223.20" width="1.00" height="1.50" fill="#828e8e" /><circle cx="24.7" cy="135.0" r="3.1" fill="#1fb8f5"/><circle cx="61.0" cy="163.2" r="3.1" fill="#1fb8f5"/><circle cx="100.9" cy="128.7" r="3.1" fill="#1fb8f5"/><circle cx="149.0" cy="126.8" r="3.1" fill="#1fb8f5"/><circle cx="221.1" cy="227.0" r="3.1" fill="#1fb8f5"/><circle cx="264.8" cy="220.1" r="3.1" fill="#1fb8f5"/><circle cx="337.0" cy="238.0" r="3.1" fill="#1fb8f5"/><circle cx="353.0" cy="233.0" r="3.1" fill="#1fb8f5"/><circle cx="400.9" cy="211.9" r="3.1" fill="#1fb8f5"/><circle cx="437.0" cy="190.0" r="3.1" fill="#1fb8f5"/><circle cx="537.0" cy="311.0" r="3.1" fill="#1fb8f5"/><circle cx="573.0" cy="315.0" r="3.1" fill="#1fb8f5"/><circle cx="732.9" cy="370.1" r="3.1" fill="#1fb8f5"/><circle cx="797.0" cy="341.0" r="3.1" fill="#1fb8f5"/><circle cx="888.8" cy="296.0" r="3.1" fill="#1fb8f5"/><circle cx="924.8" cy="283.1" r="3.1" fill="#1fb8f5"/><circle cx="980.9" cy="263.0" r="3.1" fill="#1fb8f5"/><circle cx="1044.7" cy="219.8" r="3.1" fill="#1fb8f5"/><circle cx="17.0" cy="166.0" r="3.1" fill="#e07f9f"/><circle cx="48.9" cy="182.8" r="3.1" fill="#e07f9f"/><circle cx="65.2" cy="180.7" r="3.1" fill="#e07f9f"/><circle cx="125.0" cy="185.1" r="3.1" fill="#e07f9f"/><circle cx="201.1" cy="255.2" r="3.1" fill="#e07f9f"/><circle cx="249.1" cy="307.0" r="3.1" fill="#e07f9f"/><circle cx="301.1" cy="302.3" r="3.1" fill="#e07f9f"/><circle cx="345.1" cy="266.1" r="3.1" fill="#e07f9f"/><circle cx="373.0" cy="277.1" r="3.1" fill="#e07f9f"/><circle cx="424.9" cy="231.7" r="3.1" fill="#e07f9f"/><circle cx="525.1" cy="331.0" r="3.1" fill="#e07f9f"/><circle cx="557.0" cy="349.9" r="3.1" fill="#e07f9f"/><circle cx="701.0" cy="425.9" r="3.1" fill="#e07f9f"/><circle cx="749.0" cy="400.2" r="3.1" fill="#e07f9f"/><circle cx="805.0" cy="363.4" r="3.1" fill="#e07f9f"/><circle cx="909.0" cy="307.3" r="3.1" fill="#e07f9f"/><circle cx="933.0" cy="300.3" r="3.1" fill="#e07f9f"/><circle cx="989.0" cy="279.2" r="3.1" fill="#e07f9f"/><polyline fill="none" stroke="#ea1a1a" stroke-width="2.7" stroke-linejoin="round" stroke-linecap="butt" points="5.0,131.2 13.0,131.2 17.5,138.0 42.6,138.0 47.0,145.6 48.3,158.0 52.7,165.7 97.8,165.7"/><polyline fill="none" stroke="#1eeef2" stroke-width="2.7" stroke-linejoin="round" stroke-linecap="butt" points="97.8,165.9 102.2,162.0 104.0,155.6 105.3,146.9 118.2,146.9"/><polyline fill="none" stroke="#ea1a1a" stroke-width="2.7" stroke-linejoin="round" stroke-linecap="butt" points="118.2,146.9 122.2,149.4 125.4,156.9 169.4,156.7 172.5,170.2 174.4,172.7 176.3,184.0 180.7,186.5 183.2,194.0 185.0,202.0 190.0,203.8 194.5,210.0 198.2,220.0 201.4,230.7 229.0,231.0 232.7,241.4 237.1,256.4 241.5,260.2 245.3,271.5 250.3,275.9 258.0,275.9"/><polyline fill="none" stroke="#1eeef2" stroke-width="2.7" stroke-linejoin="round" stroke-linecap="butt" points="258.0,276.0 262.2,275.2 265.3,266.5 267.8,255.2 269.7,248.3 289.6,248.3"/><polyline fill="none" stroke="#ea1a1a" stroke-width="2.7" stroke-linejoin="round" stroke-linecap="butt" points="289.6,248.3 293.5,249.0 296.0,257.7 297.9,267.7 300.3,280.0 302.2,282.8 310.0,282.8"/><polyline fill="none" stroke="#1eeef2" stroke-width="2.7" stroke-linejoin="round" stroke-linecap="butt" points="310.0,283.0 314.7,282.8 319.1,272.6 321.7,267.7 325.6,260.8 332.5,257.7 338.8,249.9 394.0,249.9 401.5,242.6 406.5,235.1 412.8,234.5 419.0,228.9 430.3,228.6 435.3,222.0 440.4,218.8 446.0,211.9 458.0,211.7"/><polyline fill="none" stroke="#ea1a1a" stroke-width="2.7" stroke-linejoin="round" stroke-linecap="butt" points="458.0,211.5 462.3,213.8 466.0,223.8 469.8,238.9 473.6,248.9 485.6,250.0 489.4,257.6 496.3,263.2 505.0,265.7 509.5,276.4 513.2,288.9 518.2,296.4 521.4,310.8 528.3,315.6 532.7,322.5 556.4,323.2 561.4,337.0 570.0,337.0"/><polyline fill="none" stroke="#1eeef2" stroke-width="2.7" stroke-linejoin="round" stroke-linecap="butt" points="570.0,337.0 575.2,336.4 577.7,334.9 602.0,334.9"/><polyline fill="none" stroke="#ea1a1a" stroke-width="2.7" stroke-linejoin="round" stroke-linecap="butt" points="602.0,334.2 606.6,335.7 612.8,348.3 617.9,349.5 629.1,349.5 632.9,360.2 637.3,361.4 641.7,369.0 657.6,368.8 661.3,375.0 667.6,387.6 673.9,391.4 677.6,396.4 682.6,398.9 685.8,403.3 692.7,403.3 697.7,410.2 700.2,410.8 718.0,410.8"/><polyline fill="none" stroke="#1eeef2" stroke-width="2.7" stroke-linejoin="round" stroke-linecap="butt" points="718.0,410.8 722.1,410.2 726.5,403.9 728.4,395.2 731.5,388.9 734.0,387.0 781.7,387.0 784.2,376.3 785.4,374.5 790.5,374.0 793.6,368.2 798.0,360.7 809.5,360.9 815.1,354.0 821.4,344.6 828.9,340.2 833.3,328.3 838.3,327.6 841.4,322.6 847.7,321.4 853.3,316.4 862.7,316.4 867.8,313.2 876.5,312.6 879.0,310.7 886.6,310.1 890.3,305.1 896.6,302.6 902.9,298.2 912.9,298.2 917.9,295.9 942.6,296.2 950.0,293.4 957.0,282.0 965.0,277.0 974.0,277.0 981.4,272.0 997.7,271.4 1006.5,268.3 1017.8,268.0 1022.8,260.8 1029.0,260.8 1033.5,253.3 1039.0,252.0 1044.0,246.4 1047.3,238.8 1049.0,233.2"/><line x1="1025.50" y1="93.00" x2="1025.50" y2="653.30" stroke="#40e0c8" stroke-width="1.3" stroke-dasharray="3 3"/><line x1="1045.60" y1="93.00" x2="1045.60" y2="653.30" stroke="#cfe0e0" stroke-width="1.2" /><path d="M1048.5 93 L1058.5 93 L1053.5 98.6 Z" fill="#7f8e98"/><text x="1057.0" y="240.2" font-size="12.5" fill="#d9c23a" textLength="7.6" lengthAdjust="spacingAndGlyphs" >--</text><text x="1073.2" y="240.2" font-size="12.5" fill="#d9c23a" textLength="31.4" lengthAdjust="spacingAndGlyphs" >00:39</text><rect x="1015.4" y="282.5" width="20.3" height="27.1" fill="none" stroke="#ffffff" stroke-width="1"/><path d="M1025.3 288 L1031.6 294.8 L1028.2 294.8 L1028.2 302.6 L1022.4 302.6 L1022.4 294.8 L1019 294.8 Z" fill="none" stroke="#f0f4f4" stroke-width="1.1"/><rect x="1023.00" y="281.00" width="5.00" height="5.00" fill="#ffffff" /></g><g clip-path="url(#c1)"><rect x="5.00" y="487.20" width="2.00" height="30.50" fill="#ff0000" shape-rendering="crispEdges"/><rect x="7.00" y="487.20" width="4.00" height="22.60" fill="#ff0000" shape-rendering="crispEdges"/><rect x="11.00" y="487.20" width="4.00" height="22.60" fill="#ff0000" shape-rendering="crispEdges"/><rect x="15.00" y="487.20" width="4.00" height="22.60" fill="#ff0000" shape-rendering="crispEdges"/><rect x="19.00" y="487.20" width="4.00" height="12.10" fill="#ff0000" shape-rendering="crispEdges"/><rect x="23.00" y="487.20" width="4.00" height="7.10" fill="#ff0000" shape-rendering="crispEdges"/><rect x="27.00" y="487.20" width="4.00" height="3.50" fill="#ff0000" shape-rendering="crispEdges"/><rect x="31.00" y="476.80" width="4.00" height="10.40" fill="#32cd32" shape-rendering="crispEdges"/><rect x="35.00" y="463.20" width="4.00" height="24.00" fill="#32cd32" shape-rendering="crispEdges"/><rect x="39.00" y="470.20" width="4.00" height="17.00" fill="#32cd32" shape-rendering="crispEdges"/><rect x="43.00" y="485.20" width="4.00" height="2.00" fill="#32cd32" shape-rendering="crispEdges"/><rect x="47.00" y="487.20" width="4.00" height="10.80" fill="#ff0000" shape-rendering="crispEdges"/><rect x="51.00" y="487.20" width="4.00" height="10.50" fill="#ff0000" shape-rendering="crispEdges"/><rect x="55.00" y="487.20" width="4.00" height="8.80" fill="#ff0000" shape-rendering="crispEdges"/><rect x="59.00" y="487.20" width="4.00" height="2.50" fill="#ff0000" shape-rendering="crispEdges"/><rect x="63.00" y="486.00" width="4.00" height="1.20" fill="#32cd32" shape-rendering="crispEdges"/><rect x="67.00" y="485.70" width="4.00" height="1.50" fill="#32cd32" shape-rendering="crispEdges"/><rect x="71.00" y="478.00" width="4.00" height="9.20" fill="#32cd32" shape-rendering="crispEdges"/><rect x="75.00" y="466.00" width="4.00" height="21.20" fill="#32cd32" shape-rendering="crispEdges"/><rect x="79.00" y="462.70" width="4.00" height="24.50" fill="#32cd32" shape-rendering="crispEdges"/><rect x="83.00" y="459.00" width="4.00" height="28.20" fill="#32cd32" shape-rendering="crispEdges"/><rect x="87.00" y="456.30" width="4.00" height="30.90" fill="#32cd32" shape-rendering="crispEdges"/><rect x="91.00" y="456.30" width="4.00" height="30.90" fill="#32cd32" shape-rendering="crispEdges"/><rect x="95.00" y="456.00" width="4.00" height="31.20" fill="#32cd32" shape-rendering="crispEdges"/><rect x="99.00" y="454.00" width="4.00" height="33.20" fill="#32cd32" shape-rendering="crispEdges"/><rect x="103.00" y="459.00" width="4.00" height="28.20" fill="#32cd32" shape-rendering="crispEdges"/><rect x="107.00" y="468.00" width="4.00" height="19.20" fill="#32cd32" shape-rendering="crispEdges"/><rect x="111.00" y="476.80" width="4.00" height="10.40" fill="#32cd32" shape-rendering="crispEdges"/><rect x="115.00" y="480.20" width="4.00" height="7.00" fill="#32cd32" shape-rendering="crispEdges"/><rect x="119.00" y="484.00" width="4.00" height="3.20" fill="#32cd32" shape-rendering="crispEdges"/><rect x="123.00" y="487.20" width="4.00" height="2.50" fill="#ff0000" shape-rendering="crispEdges"/><rect x="127.00" y="485.20" width="4.00" height="2.00" fill="#32cd32" shape-rendering="crispEdges"/><rect x="131.00" y="480.20" width="4.00" height="7.00" fill="#32cd32" shape-rendering="crispEdges"/><rect x="135.00" y="476.30" width="4.00" height="10.90" fill="#32cd32" shape-rendering="crispEdges"/><rect x="139.00" y="472.70" width="4.00" height="14.50" fill="#32cd32" shape-rendering="crispEdges"/><rect x="143.00" y="463.50" width="4.00" height="23.70" fill="#32cd32" shape-rendering="crispEdges"/><rect x="147.00" y="460.20" width="4.00" height="27.00" fill="#32cd32" shape-rendering="crispEdges"/><rect x="151.00" y="460.00" width="4.00" height="27.20" fill="#32cd32" shape-rendering="crispEdges"/><rect x="155.00" y="465.20" width="4.00" height="22.00" fill="#32cd32" shape-rendering="crispEdges"/><rect x="159.00" y="472.70" width="4.00" height="14.50" fill="#32cd32" shape-rendering="crispEdges"/><rect x="163.00" y="484.00" width="4.00" height="3.20" fill="#32cd32" shape-rendering="crispEdges"/><rect x="167.00" y="487.20" width="4.00" height="8.80" fill="#ff0000" shape-rendering="crispEdges"/><rect x="171.00" y="487.20" width="4.00" height="16.80" fill="#ff0000" shape-rendering="crispEdges"/><rect x="175.00" y="487.20" width="4.00" height="24.60" fill="#ff0000" shape-rendering="crispEdges"/><rect x="179.00" y="487.20" width="4.00" height="29.60" fill="#ff0000" shape-rendering="crispEdges"/><rect x="183.00" y="487.20" width="4.00" height="31.80" fill="#ff0000" shape-rendering="crispEdges"/><rect x="187.00" y="487.20" width="4.00" height="33.50" fill="#ff0000" shape-rendering="crispEdges"/><rect x="191.00" y="487.20" width="4.00" height="34.60" fill="#ff0000" shape-rendering="crispEdges"/><rect x="195.00" y="487.20" width="4.00" height="34.60" fill="#ff0000" shape-rendering="crispEdges"/><rect x="199.00" y="487.20" width="4.00" height="33.00" fill="#ff0000" shape-rendering="crispEdges"/><rect x="203.00" y="487.20" width="4.00" height="29.60" fill="#ff0000" shape-rendering="crispEdges"/><rect x="207.00" y="487.20" width="4.00" height="25.50" fill="#ff0000" shape-rendering="crispEdges"/><rect x="211.00" y="487.20" width="4.00" height="23.00" fill="#ff0000" shape-rendering="crispEdges"/><rect x="215.00" y="487.20" width="4.00" height="20.50" fill="#ff0000" shape-rendering="crispEdges"/><rect x="219.00" y="487.20" width="4.00" height="18.00" fill="#ff0000" shape-rendering="crispEdges"/><rect x="223.00" y="487.20" width="4.00" height="21.30" fill="#ff0000" shape-rendering="crispEdges"/><rect x="227.00" y="487.20" width="4.00" height="24.60" fill="#ff0000" shape-rendering="crispEdges"/><rect x="231.00" y="487.20" width="4.00" height="28.00" fill="#ff0000" shape-rendering="crispEdges"/><rect x="235.00" y="487.20" width="4.00" height="30.50" fill="#ff0000" shape-rendering="crispEdges"/><rect x="239.00" y="487.20" width="4.00" height="33.00" fill="#ff0000" shape-rendering="crispEdges"/><rect x="243.00" y="487.20" width="4.00" height="34.60" fill="#ff0000" shape-rendering="crispEdges"/><rect x="247.00" y="487.20" width="4.00" height="34.60" fill="#ff0000" shape-rendering="crispEdges"/><rect x="251.00" y="487.20" width="4.00" height="24.60" fill="#ff0000" shape-rendering="crispEdges"/><rect x="255.00" y="487.20" width="4.00" height="13.00" fill="#ff0000" shape-rendering="crispEdges"/><rect x="259.00" y="485.20" width="4.00" height="2.00" fill="#32cd32" shape-rendering="crispEdges"/><rect x="263.00" y="474.00" width="4.00" height="13.20" fill="#32cd32" shape-rendering="crispEdges"/><rect x="267.00" y="471.80" width="4.00" height="15.40" fill="#32cd32" shape-rendering="crispEdges"/><rect x="271.00" y="474.70" width="4.00" height="12.50" fill="#32cd32" shape-rendering="crispEdges"/><rect x="275.00" y="474.00" width="4.00" height="13.20" fill="#32cd32" shape-rendering="crispEdges"/><rect x="279.00" y="476.80" width="4.00" height="10.40" fill="#32cd32" shape-rendering="crispEdges"/><rect x="283.00" y="478.00" width="4.00" height="9.20" fill="#32cd32" shape-rendering="crispEdges"/><rect x="287.00" y="479.30" width="4.00" height="7.90" fill="#32cd32" shape-rendering="crispEdges"/><rect x="291.00" y="481.80" width="4.00" height="5.40" fill="#32cd32" shape-rendering="crispEdges"/><rect x="295.00" y="487.20" width="4.00" height="2.50" fill="#ff0000" shape-rendering="crispEdges"/><rect x="299.00" y="487.20" width="4.00" height="5.80" fill="#ff0000" shape-rendering="crispEdges"/><rect x="303.00" y="487.20" width="4.00" height="3.50" fill="#ff0000" shape-rendering="crispEdges"/><rect x="307.00" y="481.80" width="4.00" height="5.40" fill="#32cd32" shape-rendering="crispEdges"/><rect x="311.00" y="473.50" width="4.00" height="13.70" fill="#32cd32" shape-rendering="crispEdges"/><rect x="315.00" y="466.00" width="4.00" height="21.20" fill="#32cd32" shape-rendering="crispEdges"/><rect x="319.00" y="458.50" width="4.00" height="28.70" fill="#32cd32" shape-rendering="crispEdges"/><rect x="323.00" y="456.80" width="4.00" height="30.40" fill="#32cd32" shape-rendering="crispEdges"/><rect x="327.00" y="455.70" width="4.00" height="31.50" fill="#32cd32" shape-rendering="crispEdges"/><rect x="331.00" y="454.70" width="4.00" height="32.50" fill="#32cd32" shape-rendering="crispEdges"/><rect x="335.00" y="453.80" width="4.00" height="33.40" fill="#32cd32" shape-rendering="crispEdges"/><rect x="339.00" y="456.80" width="4.00" height="30.40" fill="#32cd32" shape-rendering="crispEdges"/><rect x="343.00" y="462.30" width="4.00" height="24.90" fill="#32cd32" shape-rendering="crispEdges"/><rect x="347.00" y="463.50" width="4.00" height="23.70" fill="#32cd32" shape-rendering="crispEdges"/><rect x="351.00" y="459.00" width="4.00" height="28.20" fill="#32cd32" shape-rendering="crispEdges"/><rect x="355.00" y="458.00" width="4.00" height="29.20" fill="#32cd32" shape-rendering="crispEdges"/><rect x="359.00" y="466.00" width="4.00" height="21.20" fill="#32cd32" shape-rendering="crispEdges"/><rect x="363.00" y="471.80" width="4.00" height="15.40" fill="#32cd32" shape-rendering="crispEdges"/><rect x="367.00" y="475.20" width="4.00" height="12.00" fill="#32cd32" shape-rendering="crispEdges"/><rect x="371.00" y="476.80" width="4.00" height="10.40" fill="#32cd32" shape-rendering="crispEdges"/><rect x="375.00" y="479.00" width="4.00" height="8.20" fill="#32cd32" shape-rendering="crispEdges"/><rect x="379.00" y="471.80" width="4.00" height="15.40" fill="#32cd32" shape-rendering="crispEdges"/><rect x="383.00" y="466.80" width="4.00" height="20.40" fill="#32cd32" shape-rendering="crispEdges"/><rect x="387.00" y="458.50" width="4.00" height="28.70" fill="#32cd32" shape-rendering="crispEdges"/><rect x="391.00" y="456.00" width="4.00" height="31.20" fill="#32cd32" shape-rendering="crispEdges"/><rect x="395.00" y="454.00" width="4.00" height="33.20" fill="#32cd32" shape-rendering="crispEdges"/><rect x="399.00" y="454.00" width="4.00" height="33.20" fill="#32cd32" shape-rendering="crispEdges"/><rect x="403.00" y="458.00" width="4.00" height="29.20" fill="#32cd32" shape-rendering="crispEdges"/><rect x="407.00" y="457.70" width="4.00" height="29.50" fill="#32cd32" shape-rendering="crispEdges"/><rect x="411.00" y="456.80" width="4.00" height="30.40" fill="#32cd32" shape-rendering="crispEdges"/><rect x="415.00" y="458.00" width="4.00" height="29.20" fill="#32cd32" shape-rendering="crispEdges"/><rect x="419.00" y="459.70" width="4.00" height="27.50" fill="#32cd32" shape-rendering="crispEdges"/><rect x="423.00" y="462.70" width="4.00" height="24.50" fill="#32cd32" shape-rendering="crispEdges"/><rect x="427.00" y="459.00" width="4.00" height="28.20" fill="#32cd32" shape-rendering="crispEdges"/><rect x="431.00" y="457.30" width="4.00" height="29.90" fill="#32cd32" shape-rendering="crispEdges"/><rect x="435.00" y="455.20" width="4.00" height="32.00" fill="#32cd32" shape-rendering="crispEdges"/><rect x="439.00" y="454.00" width="4.00" height="33.20" fill="#32cd32" shape-rendering="crispEdges"/><rect x="443.00" y="465.20" width="4.00" height="22.00" fill="#32cd32" shape-rendering="crispEdges"/><rect x="447.00" y="481.00" width="4.00" height="6.20" fill="#32cd32" shape-rendering="crispEdges"/><rect x="451.00" y="487.20" width="4.00" height="7.10" fill="#ff0000" shape-rendering="crispEdges"/><rect x="455.00" y="487.20" width="4.00" height="11.30" fill="#ff0000" shape-rendering="crispEdges"/><rect x="459.00" y="487.20" width="4.00" height="17.10" fill="#ff0000" shape-rendering="crispEdges"/><rect x="463.00" y="487.20" width="4.00" height="27.10" fill="#ff0000" shape-rendering="crispEdges"/><rect x="467.00" y="487.20" width="4.00" height="32.10" fill="#ff0000" shape-rendering="crispEdges"/><rect x="471.00" y="487.20" width="4.00" height="34.60" fill="#ff0000" shape-rendering="crispEdges"/><rect x="475.00" y="487.20" width="4.00" height="33.00" fill="#ff0000" shape-rendering="crispEdges"/><rect x="479.00" y="487.20" width="4.00" height="32.10" fill="#ff0000" shape-rendering="crispEdges"/><rect x="483.00" y="487.20" width="4.00" height="33.00" fill="#ff0000" shape-rendering="crispEdges"/><rect x="487.00" y="487.20" width="4.00" height="34.60" fill="#ff0000" shape-rendering="crispEdges"/><rect x="491.00" y="487.20" width="4.00" height="34.60" fill="#ff0000" shape-rendering="crispEdges"/><rect x="495.00" y="487.20" width="4.00" height="34.60" fill="#ff0000" shape-rendering="crispEdges"/><rect x="499.00" y="487.20" width="4.00" height="34.60" fill="#ff0000" shape-rendering="crispEdges"/><rect x="503.00" y="487.20" width="4.00" height="34.60" fill="#ff0000" shape-rendering="crispEdges"/><rect x="507.00" y="487.20" width="4.00" height="34.60" fill="#ff0000" shape-rendering="crispEdges"/><rect x="511.00" y="487.20" width="4.00" height="34.60" fill="#ff0000" shape-rendering="crispEdges"/><rect x="515.00" y="487.20" width="4.00" height="34.60" fill="#ff0000" shape-rendering="crispEdges"/><rect x="519.00" y="487.20" width="4.00" height="34.60" fill="#ff0000" shape-rendering="crispEdges"/><rect x="523.00" y="487.20" width="4.00" height="34.60" fill="#ff0000" shape-rendering="crispEdges"/><rect x="527.00" y="487.20" width="4.00" height="34.60" fill="#ff0000" shape-rendering="crispEdges"/><rect x="531.00" y="487.20" width="4.00" height="33.80" fill="#ff0000" shape-rendering="crispEdges"/><rect x="535.00" y="487.20" width="4.00" height="28.80" fill="#ff0000" shape-rendering="crispEdges"/><rect x="539.00" y="487.20" width="4.00" height="27.10" fill="#ff0000" shape-rendering="crispEdges"/><rect x="543.00" y="487.20" width="4.00" height="26.80" fill="#ff0000" shape-rendering="crispEdges"/><rect x="547.00" y="487.20" width="4.00" height="26.30" fill="#ff0000" shape-rendering="crispEdges"/><rect x="551.00" y="487.20" width="4.00" height="26.00" fill="#ff0000" shape-rendering="crispEdges"/><rect x="555.00" y="487.20" width="4.00" height="27.10" fill="#ff0000" shape-rendering="crispEdges"/><rect x="559.00" y="487.20" width="4.00" height="28.80" fill="#ff0000" shape-rendering="crispEdges"/><rect x="563.00" y="487.20" width="4.00" height="24.60" fill="#ff0000" shape-rendering="crispEdges"/><rect x="567.00" y="487.20" width="4.00" height="17.10" fill="#ff0000" shape-rendering="crispEdges"/><rect x="571.00" y="487.20" width="4.00" height="4.10" fill="#ff0000" shape-rendering="crispEdges"/><rect x="575.00" y="484.30" width="4.00" height="2.90" fill="#32cd32" shape-rendering="crispEdges"/><rect x="579.00" y="483.00" width="4.00" height="4.20" fill="#32cd32" shape-rendering="crispEdges"/><rect x="583.00" y="481.80" width="4.00" height="5.40" fill="#32cd32" shape-rendering="crispEdges"/><rect x="587.00" y="477.20" width="4.00" height="10.00" fill="#32cd32" shape-rendering="crispEdges"/><rect x="591.00" y="475.20" width="4.00" height="12.00" fill="#32cd32" shape-rendering="crispEdges"/><rect x="595.00" y="477.20" width="4.00" height="10.00" fill="#32cd32" shape-rendering="crispEdges"/><rect x="599.00" y="480.20" width="4.00" height="7.00" fill="#32cd32" shape-rendering="crispEdges"/><rect x="603.00" y="484.30" width="4.00" height="2.90" fill="#32cd32" shape-rendering="crispEdges"/><rect x="607.00" y="487.20" width="4.00" height="3.80" fill="#ff0000" shape-rendering="crispEdges"/><rect x="611.00" y="487.20" width="4.00" height="7.10" fill="#ff0000" shape-rendering="crispEdges"/><rect x="615.00" y="483.00" width="4.00" height="4.20" fill="#32cd32" shape-rendering="crispEdges"/><rect x="619.00" y="478.00" width="4.00" height="9.20" fill="#32cd32" shape-rendering="crispEdges"/><rect x="623.00" y="481.80" width="4.00" height="5.40" fill="#32cd32" shape-rendering="crispEdges"/><rect x="627.00" y="487.20" width="4.00" height="7.10" fill="#ff0000" shape-rendering="crispEdges"/><rect x="631.00" y="487.20" width="4.00" height="11.30" fill="#ff0000" shape-rendering="crispEdges"/><rect x="635.00" y="487.20" width="4.00" height="15.50" fill="#ff0000" shape-rendering="crispEdges"/><rect x="639.00" y="487.20" width="4.00" height="18.00" fill="#ff0000" shape-rendering="crispEdges"/><rect x="643.00" y="487.20" width="4.00" height="19.60" fill="#ff0000" shape-rendering="crispEdges"/><rect x="647.00" y="487.20" width="4.00" height="18.00" fill="#ff0000" shape-rendering="crispEdges"/><rect x="651.00" y="487.20" width="4.00" height="17.10" fill="#ff0000" shape-rendering="crispEdges"/><rect x="655.00" y="487.20" width="4.00" height="23.00" fill="#ff0000" shape-rendering="crispEdges"/><rect x="659.00" y="487.20" width="4.00" height="28.80" fill="#ff0000" shape-rendering="crispEdges"/><rect x="663.00" y="487.20" width="4.00" height="32.10" fill="#ff0000" shape-rendering="crispEdges"/><rect x="667.00" y="487.20" width="4.00" height="33.80" fill="#ff0000" shape-rendering="crispEdges"/><rect x="671.00" y="487.20" width="4.00" height="34.60" fill="#ff0000" shape-rendering="crispEdges"/><rect x="675.00" y="487.20" width="4.00" height="34.60" fill="#ff0000" shape-rendering="crispEdges"/><rect x="679.00" y="487.20" width="4.00" height="34.60" fill="#ff0000" shape-rendering="crispEdges"/><rect x="683.00" y="487.20" width="4.00" height="34.60" fill="#ff0000" shape-rendering="crispEdges"/><rect x="687.00" y="487.20" width="4.00" height="34.60" fill="#ff0000" shape-rendering="crispEdges"/><rect x="691.00" y="487.20" width="4.00" height="34.60" fill="#ff0000" shape-rendering="crispEdges"/><rect x="695.00" y="487.20" width="4.00" height="34.60" fill="#ff0000" shape-rendering="crispEdges"/><rect x="699.00" y="487.20" width="4.00" height="34.60" fill="#ff0000" shape-rendering="crispEdges"/><rect x="703.00" y="487.20" width="4.00" height="13.00" fill="#ff0000" shape-rendering="crispEdges"/><rect x="707.00" y="484.30" width="4.00" height="2.90" fill="#32cd32" shape-rendering="crispEdges"/><rect x="711.00" y="468.00" width="4.00" height="19.20" fill="#32cd32" shape-rendering="crispEdges"/><rect x="715.00" y="461.00" width="4.00" height="26.20" fill="#32cd32" shape-rendering="crispEdges"/><rect x="719.00" y="456.00" width="4.00" height="31.20" fill="#32cd32" shape-rendering="crispEdges"/><rect x="723.00" y="454.00" width="4.00" height="33.20" fill="#32cd32" shape-rendering="crispEdges"/><rect x="727.00" y="454.00" width="4.00" height="33.20" fill="#32cd32" shape-rendering="crispEdges"/><rect x="731.00" y="454.00" width="4.00" height="33.20" fill="#32cd32" shape-rendering="crispEdges"/><rect x="735.00" y="457.70" width="4.00" height="29.50" fill="#32cd32" shape-rendering="crispEdges"/><rect x="739.00" y="458.50" width="4.00" height="28.70" fill="#32cd32" shape-rendering="crispEdges"/><rect x="743.00" y="457.30" width="4.00" height="29.90" fill="#32cd32" shape-rendering="crispEdges"/><rect x="747.00" y="464.00" width="4.00" height="23.20" fill="#32cd32" shape-rendering="crispEdges"/><rect x="751.00" y="466.00" width="4.00" height="21.20" fill="#32cd32" shape-rendering="crispEdges"/><rect x="755.00" y="467.70" width="4.00" height="19.50" fill="#32cd32" shape-rendering="crispEdges"/><rect x="759.00" y="466.30" width="4.00" height="20.90" fill="#32cd32" shape-rendering="crispEdges"/><rect x="763.00" y="466.00" width="4.00" height="21.20" fill="#32cd32" shape-rendering="crispEdges"/><rect x="767.00" y="466.80" width="4.00" height="20.40" fill="#32cd32" shape-rendering="crispEdges"/><rect x="771.00" y="466.80" width="4.00" height="20.40" fill="#32cd32" shape-rendering="crispEdges"/><rect x="775.00" y="462.70" width="4.00" height="24.50" fill="#32cd32" shape-rendering="crispEdges"/><rect x="779.00" y="458.00" width="4.00" height="29.20" fill="#32cd32" shape-rendering="crispEdges"/><rect x="783.00" y="455.20" width="4.00" height="32.00" fill="#32cd32" shape-rendering="crispEdges"/><rect x="787.00" y="454.00" width="4.00" height="33.20" fill="#32cd32" shape-rendering="crispEdges"/><rect x="791.00" y="454.00" width="4.00" height="33.20" fill="#32cd32" shape-rendering="crispEdges"/><rect x="795.00" y="454.00" width="4.00" height="33.20" fill="#32cd32" shape-rendering="crispEdges"/><rect x="799.00" y="459.00" width="4.00" height="28.20" fill="#32cd32" shape-rendering="crispEdges"/><rect x="803.00" y="461.80" width="4.00" height="25.40" fill="#32cd32" shape-rendering="crispEdges"/><rect x="807.00" y="462.70" width="4.00" height="24.50" fill="#32cd32" shape-rendering="crispEdges"/><rect x="811.00" y="459.70" width="4.00" height="27.50" fill="#32cd32" shape-rendering="crispEdges"/><rect x="815.00" y="457.30" width="4.00" height="29.90" fill="#32cd32" shape-rendering="crispEdges"/><rect x="819.00" y="455.20" width="4.00" height="32.00" fill="#32cd32" shape-rendering="crispEdges"/><rect x="823.00" y="454.00" width="4.00" height="33.20" fill="#32cd32" shape-rendering="crispEdges"/><rect x="827.00" y="454.00" width="4.00" height="33.20" fill="#32cd32" shape-rendering="crispEdges"/><rect x="831.00" y="454.00" width="4.00" height="33.20" fill="#32cd32" shape-rendering="crispEdges"/><rect x="835.00" y="454.00" width="4.00" height="33.20" fill="#32cd32" shape-rendering="crispEdges"/><rect x="839.00" y="456.80" width="4.00" height="30.40" fill="#32cd32" shape-rendering="crispEdges"/><rect x="843.00" y="458.50" width="4.00" height="28.70" fill="#32cd32" shape-rendering="crispEdges"/><rect x="847.00" y="459.30" width="4.00" height="27.90" fill="#32cd32" shape-rendering="crispEdges"/><rect x="851.00" y="462.20" width="4.00" height="25.00" fill="#32cd32" shape-rendering="crispEdges"/><rect x="855.00" y="465.20" width="4.00" height="22.00" fill="#32cd32" shape-rendering="crispEdges"/><rect x="859.00" y="465.70" width="4.00" height="21.50" fill="#32cd32" shape-rendering="crispEdges"/><rect x="863.00" y="466.80" width="4.00" height="20.40" fill="#32cd32" shape-rendering="crispEdges"/><rect x="867.00" y="467.70" width="4.00" height="19.50" fill="#32cd32" shape-rendering="crispEdges"/><rect x="871.00" y="467.70" width="4.00" height="19.50" fill="#32cd32" shape-rendering="crispEdges"/><rect x="875.00" y="466.80" width="4.00" height="20.40" fill="#32cd32" shape-rendering="crispEdges"/><rect x="879.00" y="466.30" width="4.00" height="20.90" fill="#32cd32" shape-rendering="crispEdges"/><rect x="883.00" y="466.00" width="4.00" height="21.20" fill="#32cd32" shape-rendering="crispEdges"/><rect x="887.00" y="462.20" width="4.00" height="25.00" fill="#32cd32" shape-rendering="crispEdges"/><rect x="891.00" y="459.30" width="4.00" height="27.90" fill="#32cd32" shape-rendering="crispEdges"/><rect x="895.00" y="457.30" width="4.00" height="29.90" fill="#32cd32" shape-rendering="crispEdges"/><rect x="899.00" y="457.30" width="4.00" height="29.90" fill="#32cd32" shape-rendering="crispEdges"/><rect x="903.00" y="474.00" width="4.00" height="13.20" fill="#32cd32" shape-rendering="crispEdges"/><rect x="907.00" y="480.20" width="4.00" height="7.00" fill="#32cd32" shape-rendering="crispEdges"/><rect x="911.00" y="481.80" width="4.00" height="5.40" fill="#32cd32" shape-rendering="crispEdges"/><rect x="915.00" y="475.20" width="4.00" height="12.00" fill="#32cd32" shape-rendering="crispEdges"/><rect x="919.00" y="470.20" width="4.00" height="17.00" fill="#32cd32" shape-rendering="crispEdges"/><rect x="923.00" y="475.20" width="4.00" height="12.00" fill="#32cd32" shape-rendering="crispEdges"/><rect x="927.00" y="474.00" width="4.00" height="13.20" fill="#32cd32" shape-rendering="crispEdges"/><rect x="931.00" y="487.20" width="4.00" height="11.30" fill="#ff0000" shape-rendering="crispEdges"/><rect x="935.00" y="487.20" width="4.00" height="19.60" fill="#ff0000" shape-rendering="crispEdges"/><rect x="939.00" y="487.20" width="4.00" height="22.10" fill="#ff0000" shape-rendering="crispEdges"/><rect x="943.00" y="487.20" width="4.00" height="17.10" fill="#ff0000" shape-rendering="crispEdges"/><rect x="947.00" y="487.20" width="4.00" height="8.00" fill="#ff0000" shape-rendering="crispEdges"/><rect x="951.00" y="481.00" width="4.00" height="6.20" fill="#32cd32" shape-rendering="crispEdges"/><rect x="955.00" y="468.00" width="4.00" height="19.20" fill="#32cd32" shape-rendering="crispEdges"/><rect x="959.00" y="468.00" width="4.00" height="19.20" fill="#32cd32" shape-rendering="crispEdges"/><rect x="963.00" y="478.50" width="4.00" height="8.70" fill="#32cd32" shape-rendering="crispEdges"/><rect x="967.00" y="478.50" width="4.00" height="8.70" fill="#32cd32" shape-rendering="crispEdges"/><rect x="971.00" y="475.20" width="4.00" height="12.00" fill="#32cd32" shape-rendering="crispEdges"/><rect x="975.00" y="470.20" width="4.00" height="17.00" fill="#32cd32" shape-rendering="crispEdges"/><rect x="979.00" y="466.30" width="4.00" height="20.90" fill="#32cd32" shape-rendering="crispEdges"/><rect x="983.00" y="487.20" width="4.00" height="5.50" fill="#ff0000" shape-rendering="crispEdges"/><rect x="987.00" y="487.20" width="4.00" height="24.60" fill="#ff0000" shape-rendering="crispEdges"/><rect x="991.00" y="487.20" width="4.00" height="22.10" fill="#ff0000" shape-rendering="crispEdges"/><rect x="995.00" y="487.20" width="4.00" height="7.10" fill="#ff0000" shape-rendering="crispEdges"/><rect x="999.00" y="483.50" width="4.00" height="3.70" fill="#32cd32" shape-rendering="crispEdges"/><rect x="1003.00" y="480.20" width="4.00" height="7.00" fill="#32cd32" shape-rendering="crispEdges"/><rect x="1007.00" y="487.20" width="4.00" height="8.00" fill="#ff0000" shape-rendering="crispEdges"/><rect x="1011.00" y="487.20" width="4.00" height="14.60" fill="#ff0000" shape-rendering="crispEdges"/><rect x="1015.00" y="487.20" width="4.00" height="12.10" fill="#ff0000" shape-rendering="crispEdges"/><rect x="1019.00" y="487.20" width="4.00" height="3.80" fill="#ff0000" shape-rendering="crispEdges"/><rect x="1023.00" y="481.80" width="4.00" height="5.40" fill="#32cd32" shape-rendering="crispEdges"/><rect x="1027.00" y="472.70" width="4.00" height="14.50" fill="#32cd32" shape-rendering="crispEdges"/><rect x="1031.00" y="465.20" width="4.00" height="22.00" fill="#32cd32" shape-rendering="crispEdges"/><rect x="1035.00" y="466.00" width="4.00" height="21.20" fill="#32cd32" shape-rendering="crispEdges"/><rect x="1039.00" y="460.20" width="4.00" height="27.00" fill="#32cd32" shape-rendering="crispEdges"/><rect x="1043.00" y="456.00" width="4.00" height="31.20" fill="#32cd32" shape-rendering="crispEdges"/><rect x="1047.00" y="454.00" width="4.00" height="33.20" fill="#32cd32" shape-rendering="crispEdges"/><line x1="4.60" y1="487.20" x2="1318.40" y2="487.20" stroke="#f6cc1a" stroke-width="1.15" /><line x1="981.70" y1="466.80" x2="1060.80" y2="506.50" stroke="#ffffff" stroke-width="1.1" /></g><g clip-path="url(#c2)"><line x1="4.60" y1="591.60" x2="1318.40" y2="591.60" stroke="#c3d2d2" stroke-width="1" stroke-dasharray="3 2.3"/><polyline fill="none" stroke="#7a9090" stroke-width="0.8" stroke-dasharray="2.5 2.5" points="5.5,618.2 9.5,618.2 13.5,618.2 17.5,618.2 21.5,618.2 25.5,618.2 29.5,618.2 33.5,618.2 37.5,618.2 41.5,618.2 45.5,618.2 49.5,618.2 53.5,618.2 57.5,618.2 61.5,618.2 65.5,618.2 69.5,618.2 73.5,618.2 77.5,618.2 81.5,618.2 85.5,618.2 89.5,618.2 93.5,618.2 97.5,562.9 101.5,562.9 105.5,562.9 109.5,562.9 113.5,618.2 117.5,618.2 121.5,618.2 125.5,618.2 129.5,618.2 133.5,618.2 137.5,618.2 141.5,618.2 145.5,562.9 149.5,562.9 153.5,562.9 157.5,562.9 161.5,562.9 165.5,562.9 169.5,618.2 173.5,618.2 177.5,618.2 181.5,618.2 185.5,618.2 189.5,618.2 193.5,618.2 197.5,618.2 201.5,618.2 205.5,618.2 209.5,618.2 213.5,618.2 217.5,618.2 221.5,618.2 225.5,618.2 229.5,618.2 233.5,618.2 237.5,618.2 241.5,618.2 245.5,618.2 249.5,618.2 253.5,618.2 257.5,618.2 261.5,618.2 265.5,562.9 269.5,562.9 273.5,562.9 277.5,562.9 281.5,562.9 285.5,618.2 289.5,618.2 293.5,618.2 297.5,618.2 301.5,618.2 305.5,618.2 309.5,618.2 313.5,618.2 317.5,618.2 321.5,562.9 325.5,562.9 329.5,562.9 333.5,562.9 337.5,562.9 341.5,562.9 345.5,562.9 349.5,562.9 353.5,562.9 357.5,562.9 361.5,562.9 365.5,562.9 369.5,618.2 373.5,618.2 377.5,618.2 381.5,618.2 385.5,562.9 389.5,562.9 393.5,562.9 397.5,562.9 401.5,562.9 405.5,562.9 409.5,562.9 413.5,562.9 417.5,562.9 421.5,562.9 425.5,562.9 429.5,562.9 433.5,562.9 437.5,562.9 441.5,562.9 445.5,562.9 449.5,562.9 453.5,618.2 457.5,618.2 461.5,618.2 465.5,618.2 469.5,618.2 473.5,618.2 477.5,618.2 481.5,618.2 485.5,618.2 489.5,618.2 493.5,618.2 497.5,618.2 501.5,618.2 505.5,618.2 509.5,618.2 513.5,618.2 517.5,618.2 521.5,618.2 525.5,618.2 529.5,618.2 533.5,618.2 537.5,618.2 541.5,618.2 545.5,618.2 549.5,618.2 553.5,618.2 557.5,618.2 561.5,618.2 565.5,618.2 569.5,618.2 573.5,591.6 577.5,562.9 581.5,562.9 585.5,618.2 589.5,618.2 593.5,618.2 597.5,618.2 601.5,618.2 605.5,618.2 609.5,618.2 613.5,618.2 617.5,618.2 621.5,618.2 625.5,618.2 629.5,618.2 633.5,618.2 637.5,618.2 641.5,618.2 645.5,618.2 649.5,618.2 653.5,618.2 657.5,618.2 661.5,618.2 665.5,618.2 669.5,618.2 673.5,618.2 677.5,618.2 681.5,618.2 685.5,618.2 689.5,618.2 693.5,618.2 697.5,618.2 701.5,618.2 705.5,618.2 709.5,618.2 713.5,618.2 717.5,618.2 721.5,618.2 725.5,562.9 729.5,562.9 733.5,562.9 737.5,562.9 741.5,562.9 745.5,562.9 749.5,562.9 753.5,562.9 757.5,562.9 761.5,562.9 765.5,562.9 769.5,562.9 773.5,562.9 777.5,562.9 781.5,562.9 785.5,562.9 789.5,562.9 793.5,562.9 797.5,562.9 801.5,562.9 805.5,562.9 809.5,562.9 813.5,562.9 817.5,562.9 821.5,562.9 825.5,562.9 829.5,562.9 833.5,562.9 837.5,562.9 841.5,562.9 845.5,562.9 849.5,562.9 853.5,562.9 857.5,562.9 861.5,562.9 865.5,562.9 869.5,562.9 873.5,562.9 877.5,562.9 881.5,562.9 885.5,562.9 889.5,562.9 893.5,562.9 897.5,562.9 901.5,562.9 905.5,562.9 909.5,562.9 913.5,562.9 917.5,562.9 921.5,562.9 925.5,562.9 929.5,562.9 933.5,562.9 937.5,562.9 941.5,562.9 945.5,562.9 949.5,562.9 953.5,562.9 957.5,562.9 961.5,562.9 965.5,562.9 969.5,562.9 973.5,562.9 977.5,562.9 981.5,562.9 985.5,562.9 989.5,562.9 993.5,562.9 997.5,562.9 1001.5,562.9 1005.5,562.9 1009.5,562.9 1013.5,562.9 1017.5,562.9 1021.5,562.9 1025.5,562.9 1029.5,562.9 1033.5,562.9 1037.5,562.9 1041.5,562.9 1045.5,562.9 1049.5,562.9"/><polyline fill="none" stroke="#787878" stroke-width="1.9" stroke-linejoin="round" points="5.2,638.4 9.4,626.2 14.0,624.3 17.8,627.1 23.4,618.7 30.9,614.0 37.5,591.9 40.3,596.2 44.0,615.9 49.0,635.6 53.4,631.8 58.0,630.9 62.7,623.4 66.5,621.5 70.2,625.3 75.9,617.8 80.5,612.2 85.2,606.9 89.9,606.5 93.7,600.0 96.5,585.9 100.2,566.3 103.0,559.7 105.8,560.6 108.6,569.1 112.4,595.3 117.1,602.8 121.7,610.3 125.1,618.2 128.3,614.0 133.0,604.7 138.6,597.2 142.3,592.5 145.2,576.6 148.9,555.0 153.6,554.5 157.3,563.5 161.1,571.9 164.8,589.7 168.6,608.4 172.3,630.9 177.0,644.0 180.7,646.8 185.4,638.4 192.0,633.7 196.7,640.6 200.4,639.3 204.2,632.8 208.8,628.1 215.4,625.3 222.9,622.5 224.7,621.5 229.4,629.0 234.0,638.4 238.7,641.2 244.3,644.0 249.0,645.9 250.9,640.3 254.6,617.8 257.5,600.9 260.3,584.1 264.0,563.5 265.9,558.2 269.6,558.2 273.4,565.3 278.1,572.8 283.7,589.7 289.3,597.2 294.0,602.8 298.7,615.9 301.5,622.5 305.2,623.4 309.0,615.9 313.7,602.8 320.2,587.8 327.7,579.4 332.4,567.2 337.1,551.8 339.9,552.2 342.7,557.8 345.5,567.2 349.2,569.1 353.0,563.5 358.6,565.3 362.3,575.6 367.0,591.6 370.8,610.3 373.6,619.7 377.3,619.7 381.1,604.7 385.8,589.7 392.3,571.0 397.9,552.2 401.3,545.7 404.5,551.3 408.2,559.3 413.9,557.8 421.4,557.8 427.0,559.7 433.5,549.4 440.1,544.4 442.8,545.7 445.6,556.0 448.4,571.0 452.2,591.6 457.8,604.7 462.1,617.8 465.3,632.8 470.0,634.6 473.7,634.6 481.2,629.4 486.8,636.5 492.4,642.5 499.9,643.1 504.6,644.9 510.2,641.8 514.9,644.0 520.5,644.9 526.2,641.2 531.8,636.9 536.5,628.1 541.1,628.1 545.3,634.6 549.6,634.6 553.3,629.4 557.1,634.6 562.7,634.6 569.2,621.5 573.0,604.7 576.7,589.7 582.3,588.7 588.0,598.1 597.3,615.0 604.8,623.4 609.5,636.1 613.3,634.6 617.9,619.7 621.3,614.4 624.5,619.7 628.2,630.9 632.9,638.9 642.3,638.9 646.0,631.8 649.8,630.0 653.5,625.6 657.3,628.1 661.0,638.0 663.7,634.6 668.4,634.6 673.1,643.1 678.7,638.4 685.3,637.4 691.8,635.0 697.5,633.7 701.6,638.9 705.9,624.3 710.6,615.9 715.3,610.3 719.9,598.1 722.7,584.1 724.6,567.2 728.4,552.2 733.0,545.3 736.8,553.2 740.5,560.6 745.2,556.0 749.0,566.3 753.7,574.7 758.3,571.9 764.0,568.1 771.4,575.1 777.1,575.1 780.8,556.0 784.6,548.5 789.2,536.3 793.4,534.4 797.7,543.8 801.4,557.8 805.2,568.1 809.8,568.1 813.6,556.0 817.3,549.4 823.0,545.7 829.5,542.5 837.0,544.2 844.5,550.3 849.2,548.5 853.9,551.3 857.6,556.0 862.3,550.3 869.8,550.3 875.4,548.5 882.0,550.7 883.7,549.4 889.4,539.1 893.1,544.7 901.5,544.7 905.3,554.1 909.0,566.3 912.8,558.8 916.5,554.7 922.1,554.7 926.8,561.6 932.4,573.8 937.1,577.5 941.8,571.9 947.4,568.1 952.1,553.2 956.8,545.7 960.5,546.6 966.2,554.1 972.7,554.1 977.4,546.2 982.1,545.7 985.8,557.8 988.6,572.8 992.4,571.9 996.1,561.6 1001.7,559.7 1007.4,563.5 1013.4,576.9 1018.6,563.5 1024.2,554.1 1028.9,546.6 1033.6,546.6 1038.3,554.7 1042.0,549.4 1045.8,542.9 1049.5,542.9"/><circle cx="101.5" cy="562.9" r="3.2" fill="#10baf8"/><circle cx="105.5" cy="562.9" r="3.2" fill="#10baf8"/><circle cx="149.5" cy="562.9" r="3.2" fill="#10baf8"/><circle cx="153.5" cy="562.9" r="3.2" fill="#10baf8"/><circle cx="157.5" cy="562.9" r="3.2" fill="#10baf8"/><circle cx="265.5" cy="562.9" r="3.2" fill="#10baf8"/><circle cx="269.5" cy="562.9" r="3.2" fill="#10baf8"/><circle cx="333.5" cy="562.9" r="3.2" fill="#10baf8"/><circle cx="337.5" cy="562.9" r="3.2" fill="#10baf8"/><circle cx="341.5" cy="562.9" r="3.2" fill="#10baf8"/><circle cx="353.5" cy="562.9" r="3.2" fill="#10baf8"/><circle cx="357.5" cy="562.9" r="3.2" fill="#10baf8"/><circle cx="397.5" cy="562.9" r="3.2" fill="#10baf8"/><circle cx="401.5" cy="562.9" r="3.2" fill="#10baf8"/><circle cx="405.5" cy="562.9" r="3.2" fill="#10baf8"/><circle cx="409.5" cy="562.9" r="3.2" fill="#10baf8"/><circle cx="413.5" cy="562.9" r="3.2" fill="#10baf8"/><circle cx="417.5" cy="562.9" r="3.2" fill="#10baf8"/><circle cx="421.5" cy="562.9" r="3.2" fill="#10baf8"/><circle cx="425.5" cy="562.9" r="3.2" fill="#10baf8"/><circle cx="429.5" cy="562.9" r="3.2" fill="#10baf8"/><circle cx="433.5" cy="562.9" r="3.2" fill="#10baf8"/><circle cx="437.5" cy="562.9" r="3.2" fill="#10baf8"/><circle cx="441.5" cy="562.9" r="3.2" fill="#10baf8"/><circle cx="445.5" cy="562.9" r="3.2" fill="#10baf8"/><circle cx="729.5" cy="562.9" r="3.2" fill="#10baf8"/><circle cx="733.5" cy="562.9" r="3.2" fill="#10baf8"/><circle cx="737.5" cy="562.9" r="3.2" fill="#10baf8"/><circle cx="741.5" cy="562.9" r="3.2" fill="#10baf8"/><circle cx="745.5" cy="562.9" r="3.2" fill="#10baf8"/><circle cx="781.5" cy="562.9" r="3.2" fill="#10baf8"/><circle cx="785.5" cy="562.9" r="3.2" fill="#10baf8"/><circle cx="789.5" cy="562.9" r="3.2" fill="#10baf8"/><circle cx="793.5" cy="562.9" r="3.2" fill="#10baf8"/><circle cx="797.5" cy="562.9" r="3.2" fill="#10baf8"/><circle cx="801.5" cy="562.9" r="3.2" fill="#10baf8"/><circle cx="813.5" cy="562.9" r="3.2" fill="#10baf8"/><circle cx="817.5" cy="562.9" r="3.2" fill="#10baf8"/><circle cx="821.5" cy="562.9" r="3.2" fill="#10baf8"/><circle cx="825.5" cy="562.9" r="3.2" fill="#10baf8"/><circle cx="829.5" cy="562.9" r="3.2" fill="#10baf8"/><circle cx="833.5" cy="562.9" r="3.2" fill="#10baf8"/><circle cx="837.5" cy="562.9" r="3.2" fill="#10baf8"/><circle cx="841.5" cy="562.9" r="3.2" fill="#10baf8"/><circle cx="845.5" cy="562.9" r="3.2" fill="#10baf8"/><circle cx="849.5" cy="562.9" r="3.2" fill="#10baf8"/><circle cx="853.5" cy="562.9" r="3.2" fill="#10baf8"/><circle cx="857.5" cy="562.9" r="3.2" fill="#10baf8"/><circle cx="861.5" cy="562.9" r="3.2" fill="#10baf8"/><circle cx="865.5" cy="562.9" r="3.2" fill="#10baf8"/><circle cx="869.5" cy="562.9" r="3.2" fill="#10baf8"/><circle cx="873.5" cy="562.9" r="3.2" fill="#10baf8"/><circle cx="877.5" cy="562.9" r="3.2" fill="#10baf8"/><circle cx="881.5" cy="562.9" r="3.2" fill="#10baf8"/><circle cx="885.5" cy="562.9" r="3.2" fill="#10baf8"/><circle cx="889.5" cy="562.9" r="3.2" fill="#10baf8"/><circle cx="893.5" cy="562.9" r="3.2" fill="#10baf8"/><circle cx="897.5" cy="562.9" r="3.2" fill="#10baf8"/><circle cx="901.5" cy="562.9" r="3.2" fill="#10baf8"/><circle cx="905.5" cy="562.9" r="3.2" fill="#10baf8"/><circle cx="913.5" cy="562.9" r="3.2" fill="#10baf8"/><circle cx="917.5" cy="562.9" r="3.2" fill="#10baf8"/><circle cx="921.5" cy="562.9" r="3.2" fill="#10baf8"/><circle cx="925.5" cy="562.9" r="3.2" fill="#10baf8"/><circle cx="953.5" cy="562.9" r="3.2" fill="#10baf8"/><circle cx="957.5" cy="562.9" r="3.2" fill="#10baf8"/><circle cx="961.5" cy="562.9" r="3.2" fill="#10baf8"/><circle cx="965.5" cy="562.9" r="3.2" fill="#10baf8"/><circle cx="969.5" cy="562.9" r="3.2" fill="#10baf8"/><circle cx="973.5" cy="562.9" r="3.2" fill="#10baf8"/><circle cx="977.5" cy="562.9" r="3.2" fill="#10baf8"/><circle cx="981.5" cy="562.9" r="3.2" fill="#10baf8"/><circle cx="985.5" cy="562.9" r="3.2" fill="#10baf8"/><circle cx="997.5" cy="562.9" r="3.2" fill="#10baf8"/><circle cx="1001.5" cy="562.9" r="3.2" fill="#10baf8"/><circle cx="1005.5" cy="562.9" r="3.2" fill="#10baf8"/><circle cx="1021.5" cy="562.9" r="3.2" fill="#10baf8"/><circle cx="1025.5" cy="562.9" r="3.2" fill="#10baf8"/><circle cx="1029.5" cy="562.9" r="3.2" fill="#10baf8"/><circle cx="1033.5" cy="562.9" r="3.2" fill="#10baf8"/><circle cx="1037.5" cy="562.9" r="3.2" fill="#10baf8"/><circle cx="1041.5" cy="562.9" r="3.2" fill="#10baf8"/><circle cx="1045.5" cy="562.9" r="3.2" fill="#10baf8"/><circle cx="1049.5" cy="562.9" r="3.2" fill="#10baf8"/><circle cx="5.5" cy="618.2" r="3.2" fill="#df7098"/><circle cx="9.5" cy="618.2" r="3.2" fill="#df7098"/><circle cx="13.5" cy="618.2" r="3.2" fill="#df7098"/><circle cx="17.5" cy="618.2" r="3.2" fill="#df7098"/><circle cx="21.5" cy="618.2" r="3.2" fill="#df7098"/><circle cx="29.5" cy="618.2" r="3.2" fill="#df7098"/><circle cx="45.5" cy="618.2" r="3.2" fill="#df7098"/><circle cx="49.5" cy="618.2" r="3.2" fill="#df7098"/><circle cx="53.5" cy="618.2" r="3.2" fill="#df7098"/><circle cx="57.5" cy="618.2" r="3.2" fill="#df7098"/><circle cx="61.5" cy="618.2" r="3.2" fill="#df7098"/><circle cx="65.5" cy="618.2" r="3.2" fill="#df7098"/><circle cx="69.5" cy="618.2" r="3.2" fill="#df7098"/><circle cx="73.5" cy="618.2" r="3.2" fill="#df7098"/><circle cx="125.5" cy="618.2" r="3.2" fill="#df7098"/><circle cx="173.5" cy="618.2" r="3.2" fill="#df7098"/><circle cx="177.5" cy="618.2" r="3.2" fill="#df7098"/><circle cx="181.5" cy="618.2" r="3.2" fill="#df7098"/><circle cx="185.5" cy="618.2" r="3.2" fill="#df7098"/><circle cx="189.5" cy="618.2" r="3.2" fill="#df7098"/><circle cx="193.5" cy="618.2" r="3.2" fill="#df7098"/><circle cx="197.5" cy="618.2" r="3.2" fill="#df7098"/><circle cx="201.5" cy="618.2" r="3.2" fill="#df7098"/><circle cx="205.5" cy="618.2" r="3.2" fill="#df7098"/><circle cx="209.5" cy="618.2" r="3.2" fill="#df7098"/><circle cx="213.5" cy="618.2" r="3.2" fill="#df7098"/><circle cx="217.5" cy="618.2" r="3.2" fill="#df7098"/><circle cx="221.5" cy="618.2" r="3.2" fill="#df7098"/><circle cx="225.5" cy="618.2" r="3.2" fill="#df7098"/><circle cx="229.5" cy="618.2" r="3.2" fill="#df7098"/><circle cx="233.5" cy="618.2" r="3.2" fill="#df7098"/><circle cx="237.5" cy="618.2" r="3.2" fill="#df7098"/><circle cx="241.5" cy="618.2" r="3.2" fill="#df7098"/><circle cx="245.5" cy="618.2" r="3.2" fill="#df7098"/><circle cx="249.5" cy="618.2" r="3.2" fill="#df7098"/><circle cx="253.5" cy="618.2" r="3.2" fill="#df7098"/><circle cx="301.5" cy="618.2" r="3.2" fill="#df7098"/><circle cx="305.5" cy="618.2" r="3.2" fill="#df7098"/><circle cx="373.5" cy="618.2" r="3.2" fill="#df7098"/><circle cx="377.5" cy="618.2" r="3.2" fill="#df7098"/><circle cx="465.5" cy="618.2" r="3.2" fill="#df7098"/><circle cx="469.5" cy="618.2" r="3.2" fill="#df7098"/><circle cx="473.5" cy="618.2" r="3.2" fill="#df7098"/><circle cx="477.5" cy="618.2" r="3.2" fill="#df7098"/><circle cx="481.5" cy="618.2" r="3.2" fill="#df7098"/><circle cx="485.5" cy="618.2" r="3.2" fill="#df7098"/><circle cx="489.5" cy="618.2" r="3.2" fill="#df7098"/><circle cx="493.5" cy="618.2" r="3.2" fill="#df7098"/><circle cx="497.5" cy="618.2" r="3.2" fill="#df7098"/><circle cx="501.5" cy="618.2" r="3.2" fill="#df7098"/><circle cx="505.5" cy="618.2" r="3.2" fill="#df7098"/><circle cx="509.5" cy="618.2" r="3.2" fill="#df7098"/><circle cx="513.5" cy="618.2" r="3.2" fill="#df7098"/><circle cx="517.5" cy="618.2" r="3.2" fill="#df7098"/><circle cx="521.5" cy="618.2" r="3.2" fill="#df7098"/><circle cx="525.5" cy="618.2" r="3.2" fill="#df7098"/><circle cx="529.5" cy="618.2" r="3.2" fill="#df7098"/><circle cx="533.5" cy="618.2" r="3.2" fill="#df7098"/><circle cx="537.5" cy="618.2" r="3.2" fill="#df7098"/><circle cx="541.5" cy="618.2" r="3.2" fill="#df7098"/><circle cx="545.5" cy="618.2" r="3.2" fill="#df7098"/><circle cx="549.5" cy="618.2" r="3.2" fill="#df7098"/><circle cx="553.5" cy="618.2" r="3.2" fill="#df7098"/><circle cx="557.5" cy="618.2" r="3.2" fill="#df7098"/><circle cx="561.5" cy="618.2" r="3.2" fill="#df7098"/><circle cx="565.5" cy="618.2" r="3.2" fill="#df7098"/><circle cx="569.5" cy="618.2" r="3.2" fill="#df7098"/><circle cx="601.5" cy="618.2" r="3.2" fill="#df7098"/><circle cx="605.5" cy="618.2" r="3.2" fill="#df7098"/><circle cx="609.5" cy="618.2" r="3.2" fill="#df7098"/><circle cx="613.5" cy="618.2" r="3.2" fill="#df7098"/><circle cx="617.5" cy="618.2" r="3.2" fill="#df7098"/><circle cx="625.5" cy="618.2" r="3.2" fill="#df7098"/><circle cx="629.5" cy="618.2" r="3.2" fill="#df7098"/><circle cx="633.5" cy="618.2" r="3.2" fill="#df7098"/><circle cx="637.5" cy="618.2" r="3.2" fill="#df7098"/><circle cx="641.5" cy="618.2" r="3.2" fill="#df7098"/><circle cx="645.5" cy="618.2" r="3.2" fill="#df7098"/><circle cx="649.5" cy="618.2" r="3.2" fill="#df7098"/><circle cx="653.5" cy="618.2" r="3.2" fill="#df7098"/><circle cx="657.5" cy="618.2" r="3.2" fill="#df7098"/><circle cx="661.5" cy="618.2" r="3.2" fill="#df7098"/><circle cx="665.5" cy="618.2" r="3.2" fill="#df7098"/><circle cx="669.5" cy="618.2" r="3.2" fill="#df7098"/><circle cx="673.5" cy="618.2" r="3.2" fill="#df7098"/><circle cx="677.5" cy="618.2" r="3.2" fill="#df7098"/><circle cx="681.5" cy="618.2" r="3.2" fill="#df7098"/><circle cx="685.5" cy="618.2" r="3.2" fill="#df7098"/><circle cx="689.5" cy="618.2" r="3.2" fill="#df7098"/><circle cx="693.5" cy="618.2" r="3.2" fill="#df7098"/><circle cx="697.5" cy="618.2" r="3.2" fill="#df7098"/><circle cx="701.5" cy="618.2" r="3.2" fill="#df7098"/><circle cx="705.5" cy="618.2" r="3.2" fill="#df7098"/></g><line x1="1025.50" y1="449.70" x2="1025.50" y2="653.30" stroke="#40e0c8" stroke-width="1.3" stroke-dasharray="3 3" stroke-dashoffset="0.7"/><line x1="1045.60" y1="449.70" x2="1045.60" y2="653.30" stroke="#cfe0e0" stroke-width="1.2" /><rect x="2.20" y="447.70" width="1360.00" height="1.50" fill="#2f4f4f" /><rect x="2.20" y="525.60" width="1360.00" height="1.50" fill="#2f4f4f" /><path d="M4.6 447.2 L4.6 92.5 L1318.4 92.5 L1318.4 447.2 Z" fill="none" stroke="#f4fafa" stroke-width="1.05"/><path d="M4.6 525.1 L4.6 449.7 L1318.4 449.7 L1318.4 525.1 Z" fill="none" stroke="#f4fafa" stroke-width="1.05"/><path d="M4.6 653.3 L4.6 527.6 L1318.4 527.6 L1318.4 653.3 Z" fill="none" stroke="#f4fafa" stroke-width="1.05"/><line x1="1318.40" y1="103.40" x2="1321.30" y2="103.40" stroke="#f4fafa" stroke-width="1" /><text x="1324.7" y="106.7" font-size="9.5" fill="#ffffff" textLength="32.4" lengthAdjust="spacingAndGlyphs" >1.16045</text><line x1="1318.40" y1="140.43" x2="1321.30" y2="140.43" stroke="#f4fafa" stroke-width="1" /><text x="1324.7" y="143.7" font-size="9.5" fill="#ffffff" textLength="32.4" lengthAdjust="spacingAndGlyphs" >1.16025</text><line x1="1318.40" y1="177.46" x2="1321.30" y2="177.46" stroke="#f4fafa" stroke-width="1" /><text x="1324.7" y="180.8" font-size="9.5" fill="#ffffff" textLength="32.4" lengthAdjust="spacingAndGlyphs" >1.16005</text><line x1="1318.40" y1="214.49" x2="1321.30" y2="214.49" stroke="#f4fafa" stroke-width="1" /><text x="1324.7" y="217.8" font-size="9.5" fill="#ffffff" textLength="32.4" lengthAdjust="spacingAndGlyphs" >1.15985</text><line x1="1318.40" y1="251.52" x2="1321.30" y2="251.52" stroke="#f4fafa" stroke-width="1" /><text x="1324.7" y="254.8" font-size="9.5" fill="#ffffff" textLength="32.4" lengthAdjust="spacingAndGlyphs" >1.15965</text><line x1="1318.40" y1="288.55" x2="1321.30" y2="288.55" stroke="#f4fafa" stroke-width="1" /><text x="1324.7" y="291.9" font-size="9.5" fill="#ffffff" textLength="32.4" lengthAdjust="spacingAndGlyphs" >1.15945</text><line x1="1318.40" y1="325.58" x2="1321.30" y2="325.58" stroke="#f4fafa" stroke-width="1" /><text x="1324.7" y="328.9" font-size="9.5" fill="#ffffff" textLength="32.4" lengthAdjust="spacingAndGlyphs" >1.15925</text><line x1="1318.40" y1="362.61" x2="1321.30" y2="362.61" stroke="#f4fafa" stroke-width="1" /><text x="1324.7" y="365.9" font-size="9.5" fill="#ffffff" textLength="32.4" lengthAdjust="spacingAndGlyphs" >1.15905</text><line x1="1318.40" y1="399.64" x2="1321.30" y2="399.64" stroke="#f4fafa" stroke-width="1" /><text x="1324.7" y="402.9" font-size="9.5" fill="#ffffff" textLength="32.4" lengthAdjust="spacingAndGlyphs" >1.15885</text><line x1="1318.40" y1="436.67" x2="1321.30" y2="436.67" stroke="#f4fafa" stroke-width="1" /><text x="1324.7" y="440.0" font-size="9.5" fill="#ffffff" textLength="32.4" lengthAdjust="spacingAndGlyphs" >1.15865</text><rect x="1320.00" y="220.00" width="41.20" height="10.80" fill="#ffffff" /><text x="1324.7" y="228.6" font-size="9.5" fill="#2f4f4f" textLength="32.4" lengthAdjust="spacingAndGlyphs" >1.15979</text><text x="1322.0" y="459.9" font-size="9.5" fill="#ffffff" textLength="10.0" lengthAdjust="spacingAndGlyphs" >55</text><rect x="1320.30" y="482.20" width="6.40" height="10.80" fill="#f2c81e" /><text x="1320.9" y="490.6" font-size="9.5" fill="#ffffff" textLength="18.8" lengthAdjust="spacingAndGlyphs" >0.00</text><text x="1322.0" y="522.1" font-size="9.5" fill="#ffffff" textLength="13.4" lengthAdjust="spacingAndGlyphs" >-55</text><text x="1322.0" y="538.1" font-size="9.5" fill="#ffffff" textLength="37.6" lengthAdjust="spacingAndGlyphs" >226.6117</text><text x="1321.2" y="594.9" font-size="9.5" fill="#ffffff" textLength="18.5" lengthAdjust="spacingAndGlyphs" >0.00</text><text x="1322.0" y="649.8" font-size="9.5" fill="#ffffff" textLength="35.5" lengthAdjust="spacingAndGlyphs" >-225.932</text><line x1="1318.40" y1="487.20" x2="1321.00" y2="487.20" stroke="#f4fafa" stroke-width="1" /><line x1="1318.40" y1="591.60" x2="1321.00" y2="591.60" stroke="#f4fafa" stroke-width="1" /><line x1="1318.40" y1="653.30" x2="1321.00" y2="653.30" stroke="#f4fafa" stroke-width="1" /><path d="M8 99 L15.4 99 L11.7 103.2 Z" fill="#ffffff"/><text x="20.4" y="103.9" font-size="9.6" fill="#ffffff" textLength="201.6" lengthAdjust="spacingAndGlyphs" >EURUSD,M1&#160; 1.15981 1.15981 1.15979 1.15979</text><text x="9.5" y="461.9" font-size="9.6" fill="#ffffff" textLength="305.5" lengthAdjust="spacingAndGlyphs" >M1&#160; StochRsi (13,32,3,LWMA,3,LWMA) 50.0000 50.0000 47.1107 47.1107</text><text x="9.4" y="540.1" font-size="9.6" fill="#ffffff" textLength="212.6" lengthAdjust="spacingAndGlyphs" >M1 Trend scalp (15,3) 100.0000 173.0468 100.0000</text><line x1="5.50" y1="653.30" x2="5.50" y2="656.80" stroke="#f4fafa" stroke-width="1" /><text x="4.0" y="666.1" font-size="9.6" fill="#ffffff" textLength="45.5" lengthAdjust="spacingAndGlyphs" >4 Oct 2021</text><line x1="69.50" y1="653.30" x2="69.50" y2="656.80" stroke="#f4fafa" stroke-width="1" /><text x="68.0" y="666.1" font-size="9.6" fill="#ffffff" textLength="49.0" lengthAdjust="spacingAndGlyphs" >4 Oct 04:09</text><line x1="133.50" y1="653.30" x2="133.50" y2="656.80" stroke="#f4fafa" stroke-width="1" /><text x="132.0" y="666.1" font-size="9.6" fill="#ffffff" textLength="49.0" lengthAdjust="spacingAndGlyphs" >4 Oct 04:25</text><line x1="197.50" y1="653.30" x2="197.50" y2="656.80" stroke="#f4fafa" stroke-width="1" /><text x="196.0" y="666.1" font-size="9.6" fill="#ffffff" textLength="49.0" lengthAdjust="spacingAndGlyphs" >4 Oct 04:41</text><line x1="261.50" y1="653.30" x2="261.50" y2="656.80" stroke="#f4fafa" stroke-width="1" /><text x="260.0" y="666.1" font-size="9.6" fill="#ffffff" textLength="49.0" lengthAdjust="spacingAndGlyphs" >4 Oct 04:57</text><line x1="325.50" y1="653.30" x2="325.50" y2="656.80" stroke="#f4fafa" stroke-width="1" /><text x="324.0" y="666.1" font-size="9.6" fill="#ffffff" textLength="49.0" lengthAdjust="spacingAndGlyphs" >4 Oct 05:13</text><line x1="389.50" y1="653.30" x2="389.50" y2="656.80" stroke="#f4fafa" stroke-width="1" /><text x="388.0" y="666.1" font-size="9.6" fill="#ffffff" textLength="49.0" lengthAdjust="spacingAndGlyphs" >4 Oct 05:29</text><line x1="453.50" y1="653.30" x2="453.50" y2="656.80" stroke="#f4fafa" stroke-width="1" /><text x="452.0" y="666.1" font-size="9.6" fill="#ffffff" textLength="49.0" lengthAdjust="spacingAndGlyphs" >4 Oct 05:45</text><line x1="517.50" y1="653.30" x2="517.50" y2="656.80" stroke="#f4fafa" stroke-width="1" /><text x="516.0" y="666.1" font-size="9.6" fill="#ffffff" textLength="49.0" lengthAdjust="spacingAndGlyphs" >4 Oct 06:01</text><line x1="581.50" y1="653.30" x2="581.50" y2="656.80" stroke="#f4fafa" stroke-width="1" /><text x="580.0" y="666.1" font-size="9.6" fill="#ffffff" textLength="49.0" lengthAdjust="spacingAndGlyphs" >4 Oct 06:17</text><line x1="645.50" y1="653.30" x2="645.50" y2="656.80" stroke="#f4fafa" stroke-width="1" /><text x="644.0" y="666.1" font-size="9.6" fill="#ffffff" textLength="49.0" lengthAdjust="spacingAndGlyphs" >4 Oct 06:33</text><line x1="709.50" y1="653.30" x2="709.50" y2="656.80" stroke="#f4fafa" stroke-width="1" /><text x="708.0" y="666.1" font-size="9.6" fill="#ffffff" textLength="49.0" lengthAdjust="spacingAndGlyphs" >4 Oct 06:49</text><line x1="773.50" y1="653.30" x2="773.50" y2="656.80" stroke="#f4fafa" stroke-width="1" /><text x="772.0" y="666.1" font-size="9.6" fill="#ffffff" textLength="49.0" lengthAdjust="spacingAndGlyphs" >4 Oct 07:05</text><line x1="837.50" y1="653.30" x2="837.50" y2="656.80" stroke="#f4fafa" stroke-width="1" /><text x="836.0" y="666.1" font-size="9.6" fill="#ffffff" textLength="49.0" lengthAdjust="spacingAndGlyphs" >4 Oct 07:21</text><line x1="901.50" y1="653.30" x2="901.50" y2="656.80" stroke="#f4fafa" stroke-width="1" /><text x="900.0" y="666.1" font-size="9.6" fill="#ffffff" textLength="49.0" lengthAdjust="spacingAndGlyphs" >4 Oct 07:37</text><line x1="965.50" y1="653.30" x2="965.50" y2="656.80" stroke="#f4fafa" stroke-width="1" /><text x="964.0" y="666.1" font-size="9.6" fill="#ffffff" textLength="49.0" lengthAdjust="spacingAndGlyphs" >4 Oct 07:53</text><line x1="1029.50" y1="653.30" x2="1029.50" y2="656.80" stroke="#f4fafa" stroke-width="1" /><rect x="985.00" y="657.00" width="21.00" height="10.80" fill="#18dcec" /><rect x="1006.00" y="657.00" width="78.70" height="10.80" fill="#d3d6d6" /><text x="988.9" y="665.9" font-size="9.6" fill="#2f4f4f" textLength="15.0" lengthAdjust="spacingAndGlyphs" >202</text><text x="1009.5" y="665.9" font-size="9.6" fill="#2f4f4f" textLength="71.9" lengthAdjust="spacingAndGlyphs" >2021.10.04 08:13</text><rect x="0.00" y="673.90" width="1362.00" height="2.10" fill="#ffffff" /><rect x="0.00" y="676.00" width="1362.00" height="18.00" fill="#f0f0f0" /><rect x="0.00" y="675.90" width="1362.00" height="1.10" fill="#101010" /><rect x="0.00" y="676.00" width="1.20" height="18.00" fill="#8a8a8a" /><rect x="1.20" y="677.00" width="0.90" height="17.00" fill="#555555" /><rect x="258.60" y="675.90" width="82.90" height="18.10" fill="#ffffff" /><line x1="258.60" y1="675.60" x2="258.60" y2="694.00" stroke="#101010" stroke-width="1.1" /><line x1="341.50" y1="675.60" x2="341.50" y2="694.00" stroke="#101010" stroke-width="1.1" /><line x1="90.50" y1="679.00" x2="90.50" y2="692.50" stroke="#5a5a5a" stroke-width="1" /><line x1="174.40" y1="679.00" x2="174.40" y2="692.50" stroke="#5a5a5a" stroke-width="1" /><text x="16.5" y="690.0" font-size="12" fill="#6c6c78" textLength="61.5" lengthAdjust="spacingAndGlyphs" >EURUSD,M1</text><text x="100.4" y="690.0" font-size="12" fill="#6c6c78" textLength="61.5" lengthAdjust="spacingAndGlyphs" >EURUSD,M1</text><text x="184.3" y="690.0" font-size="12" fill="#6c6c78" textLength="62.0" lengthAdjust="spacingAndGlyphs" >EURUSD,M1</text><text x="268.4" y="690.0" font-size="12" fill="#101010" textLength="62.2" lengthAdjust="spacingAndGlyphs" >EURUSD,M1</text><path d="M1337.5 681.3 L1337.5 688.7 L1333.2 685 Z" fill="#9a9a9a"/><path d="M1352 681.3 L1352 688.7 L1356.3 685 Z" fill="#9a9a9a"/>
<g id="chrome"><path d="M2.3 9.7 L7.2 -1 L8.7 -1 L4.1 9.7 Z" fill="#f5a840"/><path d="M8.7 -1 L11.5 -1 L16.4 9.7 L13.2 9.7 Z" fill="#f0921c"/><rect x="7.30" y="3.20" width="8.60" height="1.20" fill="#f0a030" /><rect x="5.90" y="5.60" width="11.70" height="1.70" fill="#f0921c" /><text x="23.1" y="6.9" font-size="12" fill="#000000" textLength="301.2" lengthAdjust="spacingAndGlyphs" >867019: AMarkets-Demo - Demo Account - [EURUSD,M1]</text><line x1="1245.20" y1="1.40" x2="1255.00" y2="1.40" stroke="#111" stroke-width="1.1" /><path d="M1290.3 -1 V5 H1298 V-1 M1298 3 H1300 V-1" fill="none" stroke="#111" stroke-width="1.1"/><path d="M1336.2 6 L1341 1.2 L1345.8 6" fill="none" stroke="#111" stroke-width="1.2"/><line x1="1341.00" y1="-1.00" x2="1341.00" y2="1.50" stroke="#111" stroke-width="1.2" /><rect x="0.00" y="34.00" width="1362.00" height="1.00" fill="#9b9b9b" /><rect x="0.00" y="35.00" width="1362.00" height="1.00" fill="#fbfbfb" /><rect x="5.6" y="16.6" width="11" height="8.2" rx="1" fill="#f4f8fd" stroke="#5d8fcf" stroke-width="1"/><rect x="5.60" y="16.40" width="11.00" height="1.80" fill="#6d9fd8" /><rect x="8.7" y="21.6" width="10.2" height="7.6" rx="1" fill="#f4f8fd" stroke="#5d8fcf" stroke-width="1"/><path d="M7.4 21 L9 20 L10.4 21.6 L12 19.6 L13.6 21.4 L15 20.4" fill="none" stroke="#4d7fbf" stroke-width=".9"/><path d="M10.4 25 L12 26.8 L13.4 24.4 L15 27 L16.4 24.6 L17.6 26" fill="none" stroke="#4d7fbf" stroke-width=".9"/><text x="28.3" y="27.7" font-size="12" fill="#101010" textLength="18.0" lengthAdjust="spacingAndGlyphs" >File</text><text x="64.3" y="27.7" font-size="12" fill="#101010" textLength="24.4" lengthAdjust="spacingAndGlyphs" >View</text><text x="107.4" y="27.7" font-size="12" fill="#101010" textLength="28.3" lengthAdjust="spacingAndGlyphs" >Insert</text><text x="154.5" y="27.7" font-size="12" fill="#101010" textLength="33.1" lengthAdjust="spacingAndGlyphs" >Charts</text><text x="206.9" y="27.7" font-size="12" fill="#101010" textLength="25.7" lengthAdjust="spacingAndGlyphs" >Tools</text><text x="251.4" y="27.7" font-size="12" fill="#101010" textLength="43.4" lengthAdjust="spacingAndGlyphs" >Window</text><text x="313.5" y="27.7" font-size="12" fill="#101010" textLength="23.7" lengthAdjust="spacingAndGlyphs" >Help</text><rect x="1309.70" y="15.50" width="16.60" height="17.00" fill="#ffffff" /><rect x="1309.7" y="15.5" width="16.6" height="17" fill="none" stroke="#e6e6e6" stroke-width=".8"/><rect x="1328.50" y="15.50" width="16.60" height="17.00" fill="#ffffff" /><rect x="1328.5" y="15.5" width="16.6" height="17" fill="none" stroke="#e6e6e6" stroke-width=".8"/><rect x="1347.50" y="15.50" width="16.60" height="17.00" fill="#ffffff" /><rect x="1347.5" y="15.5" width="16.6" height="17" fill="none" stroke="#e6e6e6" stroke-width=".8"/><rect x="1314.00" y="26.00" width="6.20" height="2.00" fill="#5d6b8a" /><path d="M1335.4 21.2 H1340.6 V24 M1335.4 21.2 V23.2" fill="none" stroke="#5d6b8a" stroke-width="1.4"/><rect x="1333.4" y="23.6" width="5.4" height="3.8" fill="none" stroke="#5d6b8a" stroke-width="1.4"/><path d="M1353.2 21.4 L1359.6 27.8 M1359.6 21.4 L1353.2 27.8" stroke="#5d6b8a" stroke-width="1.9" fill="none"/><rect x="0.00" y="61.00" width="866.00" height="1.00" fill="#a6a6a6" /><rect x="0.00" y="62.00" width="866.00" height="1.00" fill="#fafafa" /><line x1="865.80" y1="36.00" x2="865.80" y2="61.50" stroke="#a6a6a6" stroke-width="1" /><rect x="2.00" y="39.00" width="3.20" height="1.00" fill="#a3a3a3" /><rect x="2.00" y="41.00" width="3.20" height="1.00" fill="#a3a3a3" /><rect x="2.00" y="43.00" width="3.20" height="1.00" fill="#a3a3a3" /><rect x="2.00" y="45.00" width="3.20" height="1.00" fill="#a3a3a3" /><rect x="2.00" y="47.00" width="3.20" height="1.00" fill="#a3a3a3" /><rect x="2.00" y="49.00" width="3.20" height="1.00" fill="#a3a3a3" /><rect x="2.00" y="51.00" width="3.20" height="1.00" fill="#a3a3a3" /><rect x="2.00" y="53.00" width="3.20" height="1.00" fill="#a3a3a3" /><rect x="2.00" y="55.00" width="3.20" height="1.00" fill="#a3a3a3" /><rect x="2.00" y="57.00" width="3.20" height="1.00" fill="#a3a3a3" /><rect x="11.3" y="41.4" width="12.4" height="10" rx="1" fill="#f2f7fc" stroke="#5a82b4" stroke-width="1"/><rect x="11.30" y="41.20" width="12.40" height="1.80" fill="#6f9bd0" /><path d="M14.6 44.4 V50 M13.4 45.6 L14.6 44.2 L15.8 45.6 M13.4 48.8 L14.6 50.2 L15.8 48.8" fill="none" stroke="#7b93b3" stroke-width=".9"/><path d="M20.35 44.4 H23.85 V48.35 H27.8 V51.85 H23.85 V55.800000000000004 H20.35 V51.85 H16.400000000000002 V48.35 H20.35 Z" fill="#2ad42a" stroke="#169016" stroke-width="1" stroke-linejoin="miter"/><path d="M21.25 45.4 H22.85 M17.400000000000002 49.35 H26.6" stroke="#9cf59c" stroke-width=".8" fill="none"/><path d="M32.5 47.8 L38.3 47.8 L35.4 51.1 Z" fill="#111"/><rect x="51.8" y="46.6" width="12.8" height="9.8" rx="1" fill="#e9f1fb" stroke="#4f7fb8" stroke-width="1"/><rect x="48.3" y="41.8" width="13.2" height="9.6" rx="1" fill="#f2f7fc" stroke="#4f7fb8" stroke-width="1"/><rect x="48.30" y="41.50" width="13.20" height="1.70" fill="#6f9bd0" /><path d="M51.2 44 V49.2 M51.2 48.4 H59.6 M58.2 47.2 L59.8 48.4 L58.2 49.6 M50.2 45.2 L51.2 44 L52.2 45.2" fill="none" stroke="#6f8fb8" stroke-width=".9"/><path d="M54.4 53.8 H62.8 M55.6 52.8 L54.2 53.8 L55.6 54.8 M61.6 52.8 L63 53.8 L61.6 54.8" fill="none" stroke="#6f8fb8" stroke-width=".9"/><path d="M69.5 47.8 L75.3 47.8 L72.4 51.1 Z" fill="#111"/><line x1="83.30" y1="38.00" x2="83.30" y2="59.00" stroke="#a2a2a2" stroke-width="1" /><rect x="92.4" y="41.8" width="15.2" height="14.4" rx="1.2" fill="#eef5fc" stroke="#5b8ac4" stroke-width="1.1"/><rect x="92.40" y="41.40" width="15.20" height="1.80" fill="#7aa7dc" /><path d="M97.5 43.9 L101 47.5 L99 47.5 L99 49.9 L96.1 49.9 L96.1 47.5 L93.9 47.5 Z" fill="#2cc42c" stroke="#0f820f" stroke-width=".8"/><path d="M101.5 55 L98.1 51.2 L100.1 51.2 L100.1 49 L103 49 L103 51.2 L105 51.2 Z" fill="#f59a5a" stroke="#c8501a" stroke-width=".8"/><circle cx="128.4" cy="49.4" r="4.8" fill="none" stroke="#505050" stroke-width="1.3"/><path d="M121.2 49.4 H126.6 M130.2 49.4 H135.8 M128.4 42.4 V47.6 M128.4 51.2 V56.5" stroke="#505050" stroke-width="1.3" fill="none"/><path d="M147.6 50 V43.2 Q147.6 41.8 149 41.8 H151.6 L153 43.4 H157 Q158.2 43.4 158.2 44.6 V50 Z" fill="#f7e687" stroke="#cfae3c" stroke-width=".9"/><path d="M151.3 52.2 V57.2" stroke="#444" stroke-width="1" stroke-dasharray="1 1"/><path d="M159.3 45.6 L161 49.4 L165.2 49.8 L162 52.5 L163 56.6 L159.3 54.4 L155.6 56.6 L156.6 52.5 L153.4 49.8 L157.6 49.4 Z" fill="#f6d944" stroke="#b8941c" stroke-width=".9" stroke-linejoin="round"/><rect x="176.6" y="42.4" width="14.8" height="13" rx="1" fill="#fdfeff" stroke="#2a6cc4" stroke-width="1.2"/><rect x="177.00" y="42.80" width="2.60" height="12.20" fill="#3c7fd4" /><rect x="181.00" y="44.60" width="1.00" height="1.00" fill="#222" /><line x1="183.00" y1="45.00" x2="190.00" y2="45.00" stroke="#9fb4e0" stroke-width="0.8" /><rect x="181.00" y="46.80" width="1.00" height="1.00" fill="#222" /><line x1="183.00" y1="47.20" x2="190.00" y2="47.20" stroke="#9fb4e0" stroke-width="0.8" /><rect x="181.00" y="49.00" width="1.00" height="1.00" fill="#222" /><line x1="183.00" y1="49.40" x2="190.00" y2="49.40" stroke="#9fb4e0" stroke-width="0.8" /><rect x="181.00" y="51.20" width="1.00" height="1.00" fill="#222" /><line x1="183.00" y1="51.60" x2="190.00" y2="51.60" stroke="#9fb4e0" stroke-width="0.8" /><rect x="204.8" y="41.8" width="11.4" height="12.8" fill="#fbfbfb" stroke="#a8a8a8" stroke-width=".9"/><path d="M207.4 44 V51 M206.4 46 H207.4 M207.4 49 H208.4 M213.4 43.6 V49.4 M212.4 45 H213.4 M213.4 47.6 H214.4" stroke="#5a6a8a" stroke-width=".9" fill="none"/><circle cx="212.4" cy="49.9" r="4.6" fill="#cfe6f7" fill-opacity=".85" stroke="#8aa8cc" stroke-width="1"/><line x1="216.00" y1="53.40" x2="221.40" y2="58.00" stroke="#c89a1c" stroke-width="2.2" stroke-linecap="round"/><line x1="229.40" y1="38.00" x2="229.40" y2="59.00" stroke="#a2a2a2" stroke-width="1" /><path d="M239.4 41.8 H247.6 L250.6 44.8 V54.4 H239.4 Z" fill="#fcfcfc" stroke="#8c8c8c" stroke-width=".9"/><path d="M241.4 45 H245.8 M241.4 47.4 H248 M241.4 49.8 H244.4" stroke="#9a9a9a" stroke-width=".9"/><path d="M247.5 47.7 H251.10000000000002 V51.300000000000004 H254.70000000000002 V54.9 H251.10000000000002 V58.5 H247.5 V54.9 H243.9 V51.300000000000004 H247.5 Z" fill="#2ad42a" stroke="#169016" stroke-width="1" stroke-linejoin="miter"/><path d="M248.4 48.7 H250.10000000000002 M244.9 52.300000000000004 H253.50000000000003" stroke="#9cf59c" stroke-width=".8" fill="none"/><text x="258.6" y="52.0" font-size="12" fill="#141414" textLength="56.5" lengthAdjust="spacingAndGlyphs" >New Order</text><path d="M332.3 42 L342.6 49.3 L336 56.8 L327.2 51 Q330.8 47.4 332.3 42 Z" fill="#e8c22a" stroke="#a87a12" stroke-width=".9" stroke-linejoin="round"/><path d="M327.4 51.6 L335.8 57.2 L342.6 50.2" fill="none" stroke="#8a620c" stroke-width="1.3"/><path d="M329.6 50.6 Q332.6 47.4 333.6 44.2 L340.8 49.2" fill="none" stroke="#f9ea98" stroke-width="1"/><path d="M357.4 42.6 L362 41.2 L368 42.2 V51 H357.4 Z" fill="#3d8fe0" stroke="#1f64b4" stroke-width=".8"/><rect x="361.00" y="44.20" width="5.60" height="1.40" fill="#d8ecff" /><rect x="361.00" y="46.80" width="5.60" height="1.20" fill="#a8d0f8" /><path d="M357.6 56.2 Q355 56.2 355.4 53.8 Q355.8 51.8 358.2 52 Q359 49.6 361.8 50.2 Q363.4 48.8 365.4 50.2 Q367.6 49.8 368.2 52 Q370.8 52 370.6 54.4 Q370.4 56.2 368.4 56.2 Z" fill="#eef3fa" stroke="#7d98c0" stroke-width=".9"/><path d="M391.2 48.8 L398.8 48.8 A7.6 7.6 0 0 1 391.2 56.4 Z" fill="#5fba5f" fill-opacity=".85"/><circle cx="391.1" cy="48.8" r="7.3" fill="none" stroke="#97a9bf" stroke-width="1.1"/><circle cx="391.1" cy="48.8" r="4.7" fill="none" stroke="#7f95b0" stroke-width="1.1"/><circle cx="391.1" cy="48.8" r="2" fill="#2f7fcf"/><line x1="391.40" y1="50.00" x2="391.60" y2="56.00" stroke="#3c9a3c" stroke-width="1.5" /><ellipse cx="418.2" cy="46.9" rx="7.8" ry="2.3" fill="#4f9ee2" stroke="#2f78c0" stroke-width=".8"/><ellipse cx="418.2" cy="44.3" rx="4.7" ry="3.1" fill="#6ab2ec" stroke="#2f78c0" stroke-width=".8"/><path d="M411 48.6 Q418.3 51.4 425.4 48.6 L417.4 56.6 Z" fill="#f4d84a" stroke="#c8a41c" stroke-width=".8"/><circle cx="422.3" cy="52.7" r="4" fill="#cc221a"/><rect x="420.90" y="51.30" width="2.80" height="2.80" fill="#ffffff" /><text x="431.0" y="51.7" font-size="12" fill="#141414" textLength="66.0" lengthAdjust="spacingAndGlyphs" >AutoTrading</text><line x1="503.50" y1="36.00" x2="503.50" y2="61.50" stroke="#a2a2a2" stroke-width="1" /><rect x="507.00" y="39.00" width="3.20" height="1.00" fill="#a3a3a3" /><rect x="507.00" y="41.00" width="3.20" height="1.00" fill="#a3a3a3" /><rect x="507.00" y="43.00" width="3.20" height="1.00" fill="#a3a3a3" /><rect x="507.00" y="45.00" width="3.20" height="1.00" fill="#a3a3a3" /><rect x="507.00" y="47.00" width="3.20" height="1.00" fill="#a3a3a3" /><rect x="507.00" y="49.00" width="3.20" height="1.00" fill="#a3a3a3" /><rect x="507.00" y="51.00" width="3.20" height="1.00" fill="#a3a3a3" /><rect x="507.00" y="53.00" width="3.20" height="1.00" fill="#a3a3a3" /><rect x="507.00" y="55.00" width="3.20" height="1.00" fill="#a3a3a3" /><rect x="507.00" y="57.00" width="3.20" height="1.00" fill="#a3a3a3" /><line x1="521.40" y1="43.80" x2="521.40" y2="56.90" stroke="#4d4d4d" stroke-width="1.2" /><line x1="519.20" y1="54.70" x2="531.90" y2="54.70" stroke="#4d4d4d" stroke-width="1.2" /><path d="M519.4 45.4 L521.4 42.8 L523.4 45.4 Z" fill="#4d4d4d"/><path d="M530.3 52.7 L532.9 54.7 L530.3 56.7 Z" fill="#4d4d4d"/><path d="M527.6 44.4 V52.4 M527.6 45.6 H529.6 M525.8 51.4 H527.6" fill="none" stroke="#2f9a3f" stroke-width="1.3"/><rect x="541.00" y="37.30" width="25.00" height="21.90" fill="#f9f9f9" /><path d="M541.5 59.2 L541.5 37.8 L566 37.8" fill="none" stroke="#8a8a8a" stroke-width="1"/><path d="M541.5 58.900000000000006 L565.7 58.900000000000006 L565.7 37.8" fill="none" stroke="#ffffff" stroke-width="1"/><line x1="549.50" y1="43.80" x2="549.50" y2="56.90" stroke="#4d4d4d" stroke-width="1.2" /><line x1="547.00" y1="54.70" x2="559.80" y2="54.70" stroke="#4d4d4d" stroke-width="1.2" /><path d="M547.5 45.4 L549.5 42.8 L551.5 45.4 Z" fill="#4d4d4d"/><path d="M558.1999999999999 52.7 L560.8 54.7 L558.1999999999999 56.7 Z" fill="#4d4d4d"/><line x1="555.60" y1="41.00" x2="555.60" y2="53.00" stroke="#1b8a2b" stroke-width="1" /><rect x="553.4" y="43.2" width="4.4" height="7.6" fill="#2fe052" stroke="#178a28" stroke-width=".9"/><line x1="577.40" y1="43.80" x2="577.40" y2="56.90" stroke="#4d4d4d" stroke-width="1.2" /><line x1="575.20" y1="54.70" x2="587.90" y2="54.70" stroke="#4d4d4d" stroke-width="1.2" /><path d="M575.4 45.4 L577.4 42.8 L579.4 45.4 Z" fill="#4d4d4d"/><path d="M586.3 52.7 L588.9 54.7 L586.3 56.7 Z" fill="#4d4d4d"/><path d="M577.6 52.2 Q580 45.4 582.6 46 Q585 46.6 588 50.2" fill="none" stroke="#3f7f3f" stroke-width="1.2"/><line x1="598.30" y1="38.00" x2="598.30" y2="59.00" stroke="#a2a2a2" stroke-width="1" /><line x1="616.60" y1="51.00" x2="622.00" y2="55.80" stroke="#e8c62c" stroke-width="2.6" stroke-linecap="round"/><line x1="616.60" y1="51.00" x2="622.00" y2="55.80" stroke="#a8881c" stroke-width="0.6" /><circle cx="612.9" cy="47" r="5.5" fill="#d4ecfb" stroke="#2a7ad4" stroke-width="1.2"/><path d="M609.6 47 H616.2 M612.9 43.7 V50.3" stroke="#2a78c8" stroke-width="1.6"/><path d="M631.4 59.4 H656.6 V37.2" fill="none" stroke="#a0a0a0" stroke-width="1"/><path d="M631.4 59.4 V37.2 H656.6" fill="none" stroke="#ffffff" stroke-width="1"/><line x1="643.80" y1="49.80" x2="649.40" y2="54.80" stroke="#e8c62c" stroke-width="2.6" stroke-linecap="round"/><circle cx="640" cy="45.9" r="5.5" fill="#d4ecfb" stroke="#2a7ad4" stroke-width="1.2"/><line x1="636.80" y1="45.90" x2="643.20" y2="45.90" stroke="#2a78c8" stroke-width="1.6" /><rect x="663.00" y="41.00" width="7.80" height="7.80" fill="#4aa42a" /><rect x="663.00" y="41.00" width="7.80" height="2.00" fill="#2f7f18" /><rect x="664.20" y="44.00" width="5.40" height="3.80" fill="#f4f6fa" /><line x1="665.00" y1="46.00" x2="668.80" y2="46.00" stroke="#b4bccc" stroke-width="0.8" /><rect x="671.20" y="41.00" width="7.80" height="7.80" fill="#2f62c0" /><rect x="671.20" y="41.00" width="7.80" height="2.00" fill="#1c449a" /><rect x="672.40" y="44.00" width="5.40" height="3.80" fill="#f4f6fa" /><line x1="673.20" y1="46.00" x2="677.00" y2="46.00" stroke="#b4bccc" stroke-width="0.8" /><rect x="663.00" y="49.20" width="7.80" height="7.80" fill="#2f62c0" /><rect x="663.00" y="49.20" width="7.80" height="2.00" fill="#1c449a" /><rect x="664.20" y="52.20" width="5.40" height="3.80" fill="#f4f6fa" /><line x1="665.00" y1="54.20" x2="668.80" y2="54.20" stroke="#b4bccc" stroke-width="0.8" /><rect x="671.20" y="49.20" width="7.80" height="7.80" fill="#4aa42a" /><rect x="671.20" y="49.20" width="7.80" height="2.00" fill="#2f7f18" /><rect x="672.40" y="52.20" width="5.40" height="3.80" fill="#f4f6fa" /><line x1="673.20" y1="54.20" x2="677.00" y2="54.20" stroke="#b4bccc" stroke-width="0.8" /><line x1="688.50" y1="38.00" x2="688.50" y2="59.00" stroke="#a2a2a2" stroke-width="1" /><rect x="693.10" y="37.30" width="24.90" height="21.90" fill="#f9f9f9" /><path d="M693.6 59.2 L693.6 37.8 L718 37.8" fill="none" stroke="#8a8a8a" stroke-width="1"/><path d="M693.6 58.900000000000006 L717.7 58.900000000000006 L717.7 37.8" fill="none" stroke="#ffffff" stroke-width="1"/><line x1="701.20" y1="43.80" x2="701.20" y2="56.90" stroke="#4d4d4d" stroke-width="1.2" /><line x1="699.00" y1="54.70" x2="711.80" y2="54.70" stroke="#4d4d4d" stroke-width="1.2" /><path d="M699.2 45.4 L701.2 42.8 L703.2 45.4 Z" fill="#4d4d4d"/><path d="M710.1999999999999 52.7 L712.8 54.7 L710.1999999999999 56.7 Z" fill="#4d4d4d"/><path d="M706.2 45.4 L710.2 48.6 L706.2 51.8 Z" fill="#8fe08f" stroke="#1f9a2f" stroke-width="1"/><rect x="721.10" y="37.30" width="24.90" height="21.90" fill="#f9f9f9" /><path d="M721.6 59.2 L721.6 37.8 L746 37.8" fill="none" stroke="#8a8a8a" stroke-width="1"/><path d="M721.6 58.900000000000006 L745.7 58.900000000000006 L745.7 37.8" fill="none" stroke="#ffffff" stroke-width="1"/><line x1="729.20" y1="43.80" x2="729.20" y2="56.90" stroke="#4d4d4d" stroke-width="1.2" /><line x1="727.00" y1="54.70" x2="739.60" y2="54.70" stroke="#4d4d4d" stroke-width="1.2" /><path d="M727.2 45.4 L729.2 42.8 L731.2 45.4 Z" fill="#4d4d4d"/><path d="M738.0 52.7 L740.6 54.7 L738.0 56.7 Z" fill="#4d4d4d"/><line x1="735.40" y1="43.00" x2="735.40" y2="53.00" stroke="#3a6fc0" stroke-width="1.2" /><path d="M741 48.6 H737 M738.8 46.6 L736.6 48.6 L738.8 50.6" fill="none" stroke="#c8321e" stroke-width="1.2"/><line x1="750.40" y1="38.00" x2="750.40" y2="59.00" stroke="#a2a2a2" stroke-width="1" /><path d="M760.4 41.8 H768.6 L771.6 44.8 V54.4 H760.4 Z" fill="#fcfcfc" stroke="#8c8c8c" stroke-width=".9"/><path d="M765.8 44.2 Q764 44 764 46 V51 M762.8 47.4 H765.4" fill="none" stroke="#555" stroke-width="1"/><path d="M768.5 47.6 H772.0999999999999 V51.2 H775.6999999999999 V54.8 H772.0999999999999 V58.4 H768.5 V54.8 H764.9 V51.2 H768.5 Z" fill="#2ad42a" stroke="#169016" stroke-width="1" stroke-linejoin="miter"/><path d="M769.4 48.6 H771.0999999999999 M765.9 52.2 H774.4999999999999" stroke="#9cf59c" stroke-width=".8" fill="none"/><path d="M779.7 47.8 L785.5 47.8 L782.6 51.1 Z" fill="#111"/><circle cx="804" cy="48.8" r="6.9" fill="#f4f8fc" stroke="#1a62b8" stroke-width="2.2"/><path d="M804 44.4 V49 H807.2" fill="none" stroke="#333" stroke-width="1.1"/><path d="M816.7 47.8 L822.5 47.8 L819.6 51.1 Z" fill="#111"/><rect x="833.4" y="42.4" width="15.4" height="13" fill="#fdfdfd" stroke="#3f6fb0" stroke-width="1.1"/><rect x="833.40" y="42.00" width="15.40" height="2.00" fill="#4a80c8" /><line x1="833.60" y1="49.60" x2="848.60" y2="49.60" stroke="#4a70a8" stroke-width="0.9" /><path d="M835.6 47.6 L838 46.8 L840 47.2 L842 45.8 L844.4 46.6 L846.8 45.4" fill="none" stroke="#b8281e" stroke-width="1"/><path d="M835.6 53.4 L838 52.2 L840 53 L842.4 51.4 L844.6 52.8 L846.8 52" fill="none" stroke="#2f7f3f" stroke-width="1"/><path d="M853.7 47.8 L859.5 47.8 L856.6 51.1 Z" fill="#111"/><circle cx="1320.3" cy="46.5" r="3.7" fill="#f6f8fc" stroke="#3a5fc4" stroke-width="1.5"/><line x1="1317.60" y1="49.40" x2="1312.80" y2="53.80" stroke="#3a5fc4" stroke-width="2.1" stroke-linecap="round"/><path d="M1337 50.6 Q1337 46.4 1342.6 46.4 Q1348.6 46.4 1348.6 50.6 Q1348.6 54.4 1343 54.6 L1339.6 57.6 L1340.2 54.2 Q1337 53.4 1337 50.6 Z" fill="#f2f2f2" stroke="#b4b4b4" stroke-width=".9"/><circle cx="1351.3" cy="46.6" r="7.6" fill="#dc3420"/><circle cx="1350.6" cy="45" r="5.4" fill="#e8483a" fill-opacity=".55"/><text x="1348.4" y="51.2" font-size="12.5" fill="#ffffff" textLength="5.8" lengthAdjust="spacingAndGlyphs" >1</text><rect x="2.00" y="66.00" width="3.20" height="1.00" fill="#a3a3a3" /><rect x="2.00" y="68.00" width="3.20" height="1.00" fill="#a3a3a3" /><rect x="2.00" y="70.00" width="3.20" height="1.00" fill="#a3a3a3" /><rect x="2.00" y="72.00" width="3.20" height="1.00" fill="#a3a3a3" /><rect x="2.00" y="74.00" width="3.20" height="1.00" fill="#a3a3a3" /><rect x="2.00" y="76.00" width="3.20" height="1.00" fill="#a3a3a3" /><rect x="2.00" y="78.00" width="3.20" height="1.00" fill="#a3a3a3" /><rect x="2.00" y="80.00" width="3.20" height="1.00" fill="#a3a3a3" /><rect x="2.00" y="82.00" width="3.20" height="1.00" fill="#a3a3a3" /><rect x="2.00" y="84.00" width="3.20" height="1.00" fill="#a3a3a3" /><rect x="8.10" y="64.30" width="25.10" height="21.90" fill="#f9f9f9" /><path d="M8.6 86.2 L8.6 64.8 L33.2 64.8" fill="none" stroke="#8a8a8a" stroke-width="1"/><path d="M8.6 85.9 L32.900000000000006 85.9 L32.900000000000006 64.8" fill="none" stroke="#ffffff" stroke-width="1"/><path d="M16 68.8 L16 80.4 L18.8 77.8 L21.2 83 L23 82.2 L20.6 77.2 L24.2 77 Z" fill="#4a4a4a"/><path d="M41 76.6 H46.6 M50.4 76.6 H56 M48.5 69.2 V74.8 M48.5 78.4 V83.8" stroke="#505050" stroke-width="1.1" fill="none"/><rect x="48.00" y="76.10" width="1.00" height="1.00" fill="#505050" /><line x1="65.40" y1="65.00" x2="65.40" y2="86.00" stroke="#a2a2a2" stroke-width="1" /><line x1="82.40" y1="70.10" x2="82.40" y2="82.90" stroke="#505050" stroke-width="1.2" /><line x1="105.00" y1="76.60" x2="116.80" y2="76.60" stroke="#505050" stroke-width="1.2" /><line x1="133.10" y1="82.70" x2="145.00" y2="70.60" stroke="#505050" stroke-width="1.2" /><path d="M159 79.4 L171.6 68.8 M160.6 83 L173.2 72.4" stroke="#4a4a4a" stroke-width="1.1" fill="none"/><path d="M161.6 74.8 L162.8 82.6 M165 72 L166.2 80 M168.4 69.4 L169.6 77.2" stroke="#4a4a4a" stroke-width="1.1" fill="none"/><text x="169.8" y="84.8" font-size="6.5" fill="#333" textLength="4.2" lengthAdjust="spacingAndGlyphs" font-weight="bold">E</text><line x1="187.80" y1="69.70" x2="201.00" y2="69.70" stroke="#505050" stroke-width="1" stroke-dasharray="1 1"/><line x1="187.80" y1="72.60" x2="201.00" y2="72.60" stroke="#505050" stroke-width="1" stroke-dasharray="1 1"/><line x1="187.80" y1="76.60" x2="201.00" y2="76.60" stroke="#505050" stroke-width="1" stroke-dasharray="1 1"/><line x1="187.80" y1="80.50" x2="197.00" y2="80.50" stroke="#505050" stroke-width="1" stroke-dasharray="1 1"/><text x="197.8" y="84.8" font-size="6.5" fill="#333" textLength="4.0" lengthAdjust="spacingAndGlyphs" font-weight="bold">F</text><text x="218.8" y="80.8" font-size="12" fill="#505050" textLength="7.4" lengthAdjust="spacingAndGlyphs" >A</text><rect x="245.2" y="70.2" width="11.6" height="12.4" fill="none" stroke="#555" stroke-width="1" stroke-dasharray="1 1"/><rect x="244.40" y="69.40" width="2.00" height="1.60" fill="#555" /><text x="247.2" y="81.0" font-size="11" fill="#505050" textLength="7.6" lengthAdjust="spacingAndGlyphs" font-weight="bold">T</text><path d="M272.4 72.6 L276 69.6 L279.6 72.6 L276 75.2 Z" fill="#4a4a4a"/><path d="M279 80.4 L282.6 77.8 L286.2 80.4 L282.6 83.4 Z" fill="#4a4a4a"/><path d="M274.4 78 L276.6 80.4 L282 73.6" fill="none" stroke="#4a4a4a" stroke-width="1.3"/><path d="M290.6 75.0 L296.4 75.0 L293.5 78.3 Z" fill="#111"/><line x1="302.80" y1="62.50" x2="302.80" y2="88.00" stroke="#a6a6a6" stroke-width="1" /><rect x="306.00" y="66.00" width="3.20" height="1.00" fill="#a3a3a3" /><rect x="306.00" y="68.00" width="3.20" height="1.00" fill="#a3a3a3" /><rect x="306.00" y="70.00" width="3.20" height="1.00" fill="#a3a3a3" /><rect x="306.00" y="72.00" width="3.20" height="1.00" fill="#a3a3a3" /><rect x="306.00" y="74.00" width="3.20" height="1.00" fill="#a3a3a3" /><rect x="306.00" y="76.00" width="3.20" height="1.00" fill="#a3a3a3" /><rect x="306.00" y="78.00" width="3.20" height="1.00" fill="#a3a3a3" /><rect x="306.00" y="80.00" width="3.20" height="1.00" fill="#a3a3a3" /><rect x="306.00" y="82.00" width="3.20" height="1.00" fill="#a3a3a3" /><rect x="306.00" y="84.00" width="3.20" height="1.00" fill="#a3a3a3" /><rect x="312.20" y="64.30" width="25.00" height="21.90" fill="#f9f9f9" /><path d="M312.7 86.2 L312.7 64.8 L337.2 64.8" fill="none" stroke="#8a8a8a" stroke-width="1"/><path d="M312.7 85.9 L336.9 85.9 L336.9 64.8" fill="none" stroke="#ffffff" stroke-width="1"/><text x="317.8" y="79.9" font-size="9.3" fill="#454545" textLength="12.3" lengthAdjust="spacingAndGlyphs" >M1</text><text x="345.6" y="79.9" font-size="9.3" fill="#454545" textLength="12.6" lengthAdjust="spacingAndGlyphs" >M5</text><text x="371.6" y="79.9" font-size="9.3" fill="#454545" textLength="17.6" lengthAdjust="spacingAndGlyphs" >M15</text><text x="399.6" y="79.9" font-size="9.3" fill="#454545" textLength="17.4" lengthAdjust="spacingAndGlyphs" >M30</text><text x="430.6" y="79.9" font-size="9.3" fill="#454545" textLength="11.2" lengthAdjust="spacingAndGlyphs" >H1</text><text x="457.6" y="79.9" font-size="9.3" fill="#454545" textLength="12.4" lengthAdjust="spacingAndGlyphs" >H4</text><text x="486.6" y="79.9" font-size="9.3" fill="#454545" textLength="11.4" lengthAdjust="spacingAndGlyphs" >D1</text><text x="514.4" y="79.9" font-size="9.3" fill="#454545" textLength="13.6" lengthAdjust="spacingAndGlyphs" >W1</text><text x="540.9" y="79.9" font-size="9.3" fill="#454545" textLength="14.5" lengthAdjust="spacingAndGlyphs" >MN</text><line x1="563.60" y1="62.50" x2="563.60" y2="88.00" stroke="#a6a6a6" stroke-width="1" /></g>
</svg>
</body></html>
